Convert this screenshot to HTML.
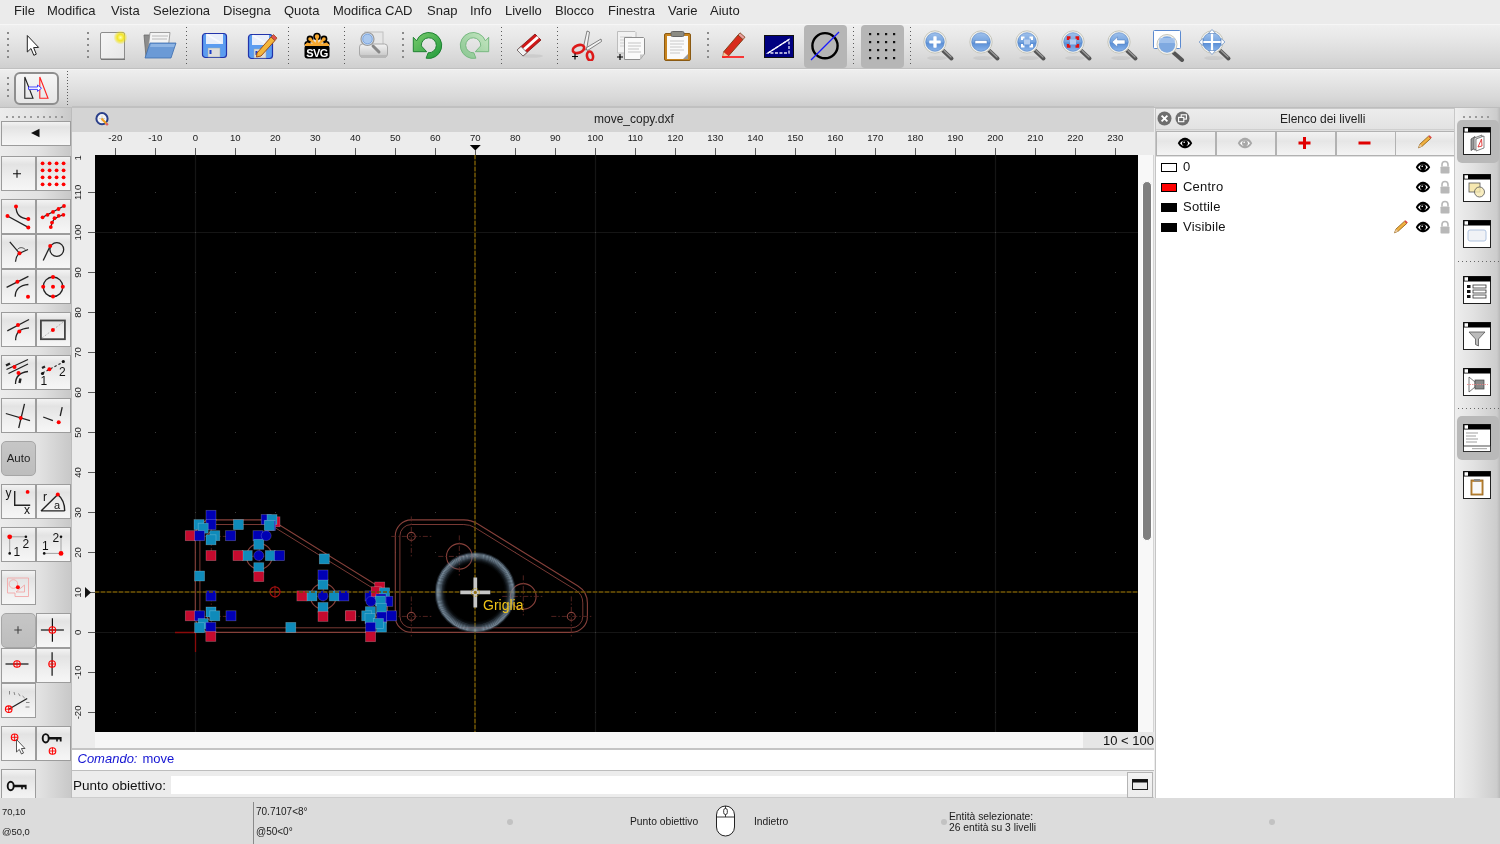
<!DOCTYPE html>
<html><head><meta charset="utf-8">
<style>
*{box-sizing:border-box;margin:0;padding:0}
html,body{width:1500px;height:844px;overflow:hidden;background:#ececec;font-family:"Liberation Sans",sans-serif;color:#1a1a1a}
.a{position:absolute}
#root{position:absolute;left:0;top:0;width:1500px;height:844px;will-change:transform}
.menu{left:0;top:0;width:1500px;height:24px;background:#ebebeb}
.menu span{position:absolute;top:3px;font-size:13px;color:#222;line-height:16px}
.tb1{left:0;top:24px;width:1500px;height:45px;background:linear-gradient(#efefef,#e6e6e6 35%,#d9d9d9 75%,#cfcfcf);border-top:1px solid #f6f6f6;border-bottom:1px solid #c0c0c0}
.tb2{left:0;top:69px;width:1500px;height:39px;background:linear-gradient(#eeeeee,#e4e4e4 35%,#d8d8d8 75%,#cccccc);border-top:1px solid #f4f4f4;border-bottom:1px solid #bdbdbd}
.sep{position:absolute;width:2px;background-image:radial-gradient(circle,#555 0.7px,transparent 1px);background-size:2px 4px}
.ldock{left:0;top:108px;width:71px;height:690px;background:linear-gradient(90deg,#e6e6e6,#dedede 70%,#c4c4c4)}
.btn{position:absolute;width:35px;height:35px;background:linear-gradient(#f7f7f7,#e4e4e4);border:1px solid #a8a8a8}
.btnl,.btnp{position:absolute;width:35px;height:35px;border:1px solid #9c9c9c;background:linear-gradient(#f3f3f3,#e3e3e3 22%,#efefef 65%,#f6f6f6)}
.btnp{background:linear-gradient(#c6c6c6,#bdbdbd);border-color:#a6a6a6}
.sec{position:absolute;left:0;width:71px;height:9px;background:linear-gradient(90deg,#d8d8d8,#c8c8c8)}
.status{left:0;top:798px;width:1500px;height:46px;background:#dcdcdc}
.st{position:absolute;font-size:10px;color:#1a1a1a;line-height:12px}
</style></head><body><div id="root">
<div class="a menu">
<span style="left:14px">File</span><span style="left:47px">Modifica</span><span style="left:111px">Vista</span><span style="left:153px">Seleziona</span><span style="left:223px">Disegna</span><span style="left:284px">Quota</span><span style="left:333px">Modifica CAD</span><span style="left:427px">Snap</span><span style="left:470px">Info</span><span style="left:505px">Livello</span><span style="left:555px">Blocco</span><span style="left:608px">Finestra</span><span style="left:668px">Varie</span><span style="left:710px">Aiuto</span>
</div>
<div class="a tb1"></div>
<div class="a tb2"></div>
<div class="a" style="left:7.0px;top:32.0px;width:2px;height:2px;background:#8a8a8a"></div><div class="a" style="left:7.0px;top:38.0px;width:2px;height:2px;background:#8a8a8a"></div><div class="a" style="left:7.0px;top:44.0px;width:2px;height:2px;background:#8a8a8a"></div><div class="a" style="left:7.0px;top:50.0px;width:2px;height:2px;background:#8a8a8a"></div><div class="a" style="left:7.0px;top:56.0px;width:2px;height:2px;background:#8a8a8a"></div><div class="a" style="left:87.0px;top:32.0px;width:2px;height:2px;background:#8a8a8a"></div><div class="a" style="left:87.0px;top:38.0px;width:2px;height:2px;background:#8a8a8a"></div><div class="a" style="left:87.0px;top:44.0px;width:2px;height:2px;background:#8a8a8a"></div><div class="a" style="left:87.0px;top:50.0px;width:2px;height:2px;background:#8a8a8a"></div><div class="a" style="left:87.0px;top:56.0px;width:2px;height:2px;background:#8a8a8a"></div><div class="a" style="left:402.0px;top:32.0px;width:2px;height:2px;background:#8a8a8a"></div><div class="a" style="left:402.0px;top:38.0px;width:2px;height:2px;background:#8a8a8a"></div><div class="a" style="left:402.0px;top:44.0px;width:2px;height:2px;background:#8a8a8a"></div><div class="a" style="left:402.0px;top:50.0px;width:2px;height:2px;background:#8a8a8a"></div><div class="a" style="left:402.0px;top:56.0px;width:2px;height:2px;background:#8a8a8a"></div><div class="a" style="left:707.0px;top:32.0px;width:2px;height:2px;background:#8a8a8a"></div><div class="a" style="left:707.0px;top:38.0px;width:2px;height:2px;background:#8a8a8a"></div><div class="a" style="left:707.0px;top:44.0px;width:2px;height:2px;background:#8a8a8a"></div><div class="a" style="left:707.0px;top:50.0px;width:2px;height:2px;background:#8a8a8a"></div><div class="a" style="left:707.0px;top:56.0px;width:2px;height:2px;background:#8a8a8a"></div><div class="a" style="left:186px;top:27px;width:1px;height:39px;background:repeating-linear-gradient(#5a5a5a 0 1px,transparent 1px 4px)"></div><div class="a" style="left:288px;top:27px;width:1px;height:39px;background:repeating-linear-gradient(#5a5a5a 0 1px,transparent 1px 4px)"></div><div class="a" style="left:344px;top:27px;width:1px;height:39px;background:repeating-linear-gradient(#5a5a5a 0 1px,transparent 1px 4px)"></div><div class="a" style="left:501px;top:27px;width:1px;height:39px;background:repeating-linear-gradient(#5a5a5a 0 1px,transparent 1px 4px)"></div><div class="a" style="left:557px;top:27px;width:1px;height:39px;background:repeating-linear-gradient(#5a5a5a 0 1px,transparent 1px 4px)"></div><div class="a" style="left:853px;top:27px;width:1px;height:39px;background:repeating-linear-gradient(#5a5a5a 0 1px,transparent 1px 4px)"></div><div class="a" style="left:910px;top:27px;width:1px;height:39px;background:repeating-linear-gradient(#5a5a5a 0 1px,transparent 1px 4px)"></div><svg class="a" style="left:24px;top:33px" width="18" height="26" viewBox="0 0 18 26"><path d="M3.3,2.5 L3.3,19 L7,15.5 L9.8,22.3 L12.3,21.2 L9.6,14.6 L14.6,14.4 Z" fill="#fff" stroke="#222" stroke-width="1" stroke-linejoin="round"/></svg><svg class="a" style="left:98px;top:30px" width="32" height="32" viewBox="0 0 32 32"><defs><radialGradient id="gl"><stop offset="0" stop-color="#ffffb0"/><stop offset="0.45" stop-color="#f4e628"/><stop offset="1" stop-color="#f0e000" stop-opacity="0"/></radialGradient><linearGradient id="pp" x1="0" y1="0" x2="1" y2="1"><stop offset="0" stop-color="#f6f6f6"/><stop offset="1" stop-color="#e6e6e6"/></linearGradient></defs><rect x="2.5" y="2.5" width="24" height="27" rx="1.5" fill="url(#pp)" stroke="#8c8c8c"/><rect x="3" y="28.5" width="24" height="1.5" fill="#777"/><circle cx="22.5" cy="7.5" r="7" fill="url(#gl)"/></svg><svg class="a" style="left:142px;top:30px" width="36" height="32" viewBox="0 0 36 32"><path d="M2,5 L12,5 L14,7 L14,27 L4,27 Z" fill="#8c8c8c" stroke="#6a6a6a" stroke-width="0.8"/><path d="M8,2.5 L28,2.5 L26,20 L6,20 Z" fill="#f4f4f4" stroke="#8a8a8a" stroke-width="0.8"/><path d="M10,6 L26,6 M10,9 L25,9" stroke="#b8b8b8" stroke-width="1.2"/><path d="M8,13 L34,13 L29,28 L3,28 Z" fill="#6b9ad6" stroke="#3f6fae" stroke-width="0.8"/><path d="M9,14 L33,14 L32,17 L8,17 Z" fill="#8fb5e4"/></svg><svg class="a" style="left:201px;top:32px" width="28" height="28" viewBox="0 0 28 28"><rect x="1.5" y="1.5" width="24" height="24" rx="3" fill="#5b9cf0" stroke="#2233aa" stroke-width="1.2"/><rect x="5" y="2" width="17" height="10" fill="#e8eefa"/><path d="M6,2.5 L20,11" stroke="#fff" stroke-width="2" opacity="0.6"/><rect x="7" y="16" width="12" height="9" fill="#dcdcdc" stroke="#9aa" stroke-width="0.5"/><rect x="8.5" y="18" width="2" height="4" fill="#1a3cc8"/></svg><svg class="a" style="left:247px;top:31px" width="32" height="30" viewBox="0 0 32 30"><g transform="translate(0,2)"><rect x="1.5" y="1.5" width="24" height="24" rx="3" fill="#5b9cf0" stroke="#2233aa" stroke-width="1.2"/><rect x="5" y="2" width="17" height="10" fill="#e8eefa"/><path d="M6,2.5 L20,11" stroke="#fff" stroke-width="2" opacity="0.6"/><rect x="7" y="16" width="12" height="9" fill="#dcdcdc" stroke="#9aa" stroke-width="0.5"/><rect x="8.5" y="18" width="2" height="4" fill="#1a3cc8"/></g><path d="M10,22 L24,6 L28,9.5 L14,25 L9.5,26 Z" fill="#f3b63c" stroke="#a0501a" stroke-width="1"/><path d="M24,6 L26.5,3.5 L30,7 L28,9.5 Z" fill="#e05050" stroke="#a0501a" stroke-width="0.8"/></svg><svg class="a" style="left:303px;top:32px" width="28" height="28" viewBox="0 0 28 28"><g fill="#f6a830" stroke="#000" stroke-width="1.6"><circle cx="14" cy="4.5" r="3"/><circle cx="7" cy="7" r="2.6"/><circle cx="21" cy="7" r="2.6"/><circle cx="4.5" cy="12" r="2.3"/><circle cx="23.5" cy="12" r="2.3"/></g><path d="M14,14 L14,5 M14,14 L7,7 M14,14 L21,7 M14,14 L4.5,12 M14,14 L23.5,12" stroke="#f6a830" stroke-width="2.5"/><rect x="1.5" y="13" width="25" height="13.5" rx="3" fill="#000"/><rect x="2" y="12" width="24" height="2" fill="#f6a830"/><text x="14" y="24.6" text-anchor="middle" font-family="Liberation Sans" font-weight="bold" font-size="11" fill="#fff" letter-spacing="-0.5">SVG</text></svg><svg class="a" style="left:357px;top:30px" width="32" height="32" viewBox="0 0 32 32"><defs><linearGradient id="pr" x1="0" y1="0" x2="0" y2="1"><stop offset="0" stop-color="#f4f4f4"/><stop offset="1" stop-color="#c4c4c4"/></linearGradient></defs><rect x="8" y="2" width="18" height="14" fill="#e6e6e6" stroke="#c0c0c0"/><rect x="2.5" y="14" width="28" height="13" rx="3" fill="url(#pr)" stroke="#a8a8a8"/><rect x="4" y="25" width="25" height="3" fill="#b8b8b8"/><path d="M16,16 L22,22" stroke="#888" stroke-width="3" stroke-linecap="round"/><circle cx="10.5" cy="9" r="6.5" fill="#c8dcf4" stroke="#9a9a9a" stroke-width="1.2"/><circle cx="10.5" cy="9" r="4.8" fill="#aac8ee" stroke="#5a8ad0" stroke-width="0.6"/></svg><svg class="a" style="left:412px;top:31px" width="31" height="30" viewBox="0 0 31 30"><defs><linearGradient id="ugu" x1="0" y1="0" x2="1" y2="1"><stop offset="0" stop-color="#7ccc6e"/><stop offset="1" stop-color="#1f9a3a"/></linearGradient></defs><path d="M1.3,6.3 L1.3,20.7 L14.7,20.7 L9.33,14.93 A7.5,7.5 0 1 1 16.15,21.77 L14.1,27.2 A13,13 0 1 0 4.59,9.84 Z" fill="url(#ugu)" stroke="#157a2a" stroke-width="0.9" stroke-linejoin="round"/></svg><svg class="a" style="left:459px;top:31px" width="31" height="30" viewBox="0 0 31 30"><g transform="translate(31,0) scale(-1,1)"><defs><linearGradient id="ugr" x1="0" y1="0" x2="1" y2="1"><stop offset="0" stop-color="#c8e8c4"/><stop offset="1" stop-color="#86c48e"/></linearGradient></defs><path d="M1.3,6.3 L1.3,20.7 L14.7,20.7 L9.33,14.93 A7.5,7.5 0 1 1 16.15,21.77 L14.1,27.2 A13,13 0 1 0 4.59,9.84 Z" fill="url(#ugr)" stroke="#70b47a" stroke-width="0.9" stroke-linejoin="round"/></g></svg><svg class="a" style="left:515px;top:31px" width="30" height="30" viewBox="0 0 30 30"><ellipse cx="17" cy="25" rx="11" ry="1.8" fill="#c8c8c8" opacity="0.8"/><path d="M2,19 L20,3 L26,9 L8,25 Z" fill="#d01818" stroke="#7a1010" stroke-width="0.8"/><path d="M4,21 L22,5 L24,7 L6,23 Z" fill="#fff"/><path d="M2,19 L6,15.5 L12,21.5 L8,25 Z" fill="#f2f2f2" stroke="#666" stroke-width="0.8"/></svg><svg class="a" style="left:570px;top:29px" width="32" height="32" viewBox="0 0 32 32"><path d="M13,20 L17,2 L19.5,3 L16.5,21 Z" fill="#f4f4f4" stroke="#666" stroke-width="0.8"/><path d="M16,19 L31,10 L31.5,12.5 L17.5,21.5 Z" fill="#f4f4f4" stroke="#666" stroke-width="0.8"/><ellipse cx="8.5" cy="20" rx="6" ry="3.8" transform="rotate(-20 8.5 20)" fill="none" stroke="#dd1a1a" stroke-width="2.6"/><ellipse cx="20" cy="27" rx="3" ry="4.6" transform="rotate(-10 20 27)" fill="none" stroke="#dd1a1a" stroke-width="2.6"/><path d="M2,27.5h6M5,24.5v6" stroke="#000" stroke-width="1.2"/></svg><svg class="a" style="left:615px;top:29px" width="34" height="34" viewBox="0 0 34 34"><path d="M2.5,2.5 L20,2.5 L21,3.5 L21,24 L2.5,24 Z" fill="#f2f2f2" stroke="#bdbdbd"/><path d="M5,8h12M5,11h12M5,14h12M5,17h12" stroke="#cfcfcf" stroke-width="1"/><path d="M9.5,8.5 L28.5,8.5 L29.5,9.5 L29.5,25 L25,30.5 L9.5,30.5 Z" fill="#fafafa" stroke="#8e8e8e"/><path d="M25,30 L25,25.5 L29.5,25.5 Z" fill="#c8c8c8"/><path d="M13,14h13M13,17h13M13,20h11M13,23h13" stroke="#c4c4c4" stroke-width="1"/><path d="M2,28h6M5,25v6" stroke="#000" stroke-width="1.2"/></svg><svg class="a" style="left:662px;top:29px" width="32" height="34" viewBox="0 0 32 34"><rect x="2.5" y="4.5" width="26" height="27" rx="1.5" fill="#c8841e" stroke="#8a5a14"/><rect x="5" y="7" width="21" height="23" fill="#fafafa"/><path d="M21,30 L26,25 L26,30 Z" fill="#9a9a9a"/><rect x="9" y="2.5" width="13" height="5" rx="1.5" fill="#8c8c84" stroke="#666"/><path d="M8,12h14M8,15h14M8,18h12M8,21h14M8,24h10" stroke="#c8c8c8" stroke-width="1"/></svg><svg class="a" style="left:720px;top:30px" width="26" height="30" viewBox="0 0 26 30"><path d="M3.5,22 L18,5 L23,9.5 L8.5,26 L3,27.5 Z" fill="#d82c1c" stroke="#7a3a10" stroke-width="0.9"/><path d="M18,5 L20,2.8 L25,7.2 L23,9.5 Z" fill="#eaa0a0" stroke="#7a3a10" stroke-width="0.8"/><path d="M3.5,22 L8.5,26 L3,27.5 Z" fill="#f0c8a0"/><rect x="2" y="26.2" width="22" height="1.6" fill="#ff1010"/></svg><svg class="a" style="left:763px;top:34px" width="32" height="25" viewBox="0 0 32 25"><rect x="1.5" y="1.5" width="29" height="22" fill="#000080" stroke="#111" stroke-width="1"/><path d="M5,19 L26,5.5 L26,19 Z" fill="none" stroke="#e8e8f8" stroke-width="1.3" stroke-dasharray="3,1.5"/><path d="M5,19 L26,5.5" stroke="#fff" stroke-width="1.3"/></svg><div class="a" style="left:804px;top:25px;width:43px;height:43px;background:#b6b6b6;border-radius:4px"></div><div class="a" style="left:861px;top:25px;width:43px;height:43px;background:#b6b6b6;border-radius:4px"></div><svg class="a" style="left:804px;top:25px" width="43" height="43" viewBox="0 0 43 43"><circle cx="21" cy="20.7" r="12.6" fill="none" stroke="#000" stroke-width="2.4"/><path d="M7,35 L35,7" stroke="#1a1aff" stroke-width="1.3"/></svg><svg class="a" style="left:861px;top:25px" width="43" height="43" viewBox="0 0 43 43"><rect x="8" y="8" width="2.2" height="2.2" fill="#111"/><rect x="8" y="16" width="2.2" height="2.2" fill="#111"/><rect x="8" y="24" width="2.2" height="2.2" fill="#111"/><rect x="8" y="32" width="2.2" height="2.2" fill="#111"/><rect x="16" y="8" width="2.2" height="2.2" fill="#111"/><rect x="16" y="16" width="2.2" height="2.2" fill="#111"/><rect x="16" y="24" width="2.2" height="2.2" fill="#111"/><rect x="16" y="32" width="2.2" height="2.2" fill="#111"/><rect x="24" y="8" width="2.2" height="2.2" fill="#111"/><rect x="24" y="16" width="2.2" height="2.2" fill="#111"/><rect x="24" y="24" width="2.2" height="2.2" fill="#111"/><rect x="24" y="32" width="2.2" height="2.2" fill="#111"/><rect x="32" y="8" width="2.2" height="2.2" fill="#111"/><rect x="32" y="16" width="2.2" height="2.2" fill="#111"/><rect x="32" y="24" width="2.2" height="2.2" fill="#111"/><rect x="32" y="32" width="2.2" height="2.2" fill="#111"/></svg><svg class="a" style="left:921px;top:29px" width="36" height="34" viewBox="0 0 36 34"><defs><linearGradient id="za" x1="0" y1="0" x2="0" y2="1"><stop offset="0" stop-color="#9fc1ec"/><stop offset="0.5" stop-color="#74a3de"/><stop offset="0.56" stop-color="#5b8fd6"/><stop offset="1" stop-color="#8ab4ea"/></linearGradient></defs><ellipse cx="16" cy="29" rx="10" ry="2" fill="#000" opacity="0.06"/><path d="M22,21.5 L30.5,29.5" stroke="#555" stroke-width="4" stroke-linecap="round"/><path d="M23,21.5 L30,28" stroke="#9a9a9a" stroke-width="1.2" stroke-linecap="round"/><circle cx="14" cy="13" r="11.2" fill="#f2f2ee" stroke="#c6c6bc" stroke-width="1"/><circle cx="14" cy="13" r="9.3" fill="url(#za)" stroke="#4e7fc4" stroke-width="0.6"/><path d="M14,7.5v11M8.5,13h11" stroke="#fff" stroke-width="3.2"/><path d="M14,7.5v11M8.5,13h11" stroke="#fff" stroke-width="2.2"/></svg><svg class="a" style="left:967px;top:29px" width="36" height="34" viewBox="0 0 36 34"><defs><linearGradient id="zb" x1="0" y1="0" x2="0" y2="1"><stop offset="0" stop-color="#9fc1ec"/><stop offset="0.5" stop-color="#74a3de"/><stop offset="0.56" stop-color="#5b8fd6"/><stop offset="1" stop-color="#8ab4ea"/></linearGradient></defs><ellipse cx="16" cy="29" rx="10" ry="2" fill="#000" opacity="0.06"/><path d="M22,21.5 L30.5,29.5" stroke="#555" stroke-width="4" stroke-linecap="round"/><path d="M23,21.5 L30,28" stroke="#9a9a9a" stroke-width="1.2" stroke-linecap="round"/><circle cx="14" cy="13" r="11.2" fill="#f2f2ee" stroke="#c6c6bc" stroke-width="1"/><circle cx="14" cy="13" r="9.3" fill="url(#zb)" stroke="#4e7fc4" stroke-width="0.6"/><rect x="8" y="11.5" width="12" height="3.2" fill="#fff" stroke="#4a78bb" stroke-width="0.5"/></svg><svg class="a" style="left:1013px;top:29px" width="36" height="34" viewBox="0 0 36 34"><defs><linearGradient id="zc" x1="0" y1="0" x2="0" y2="1"><stop offset="0" stop-color="#9fc1ec"/><stop offset="0.5" stop-color="#74a3de"/><stop offset="0.56" stop-color="#5b8fd6"/><stop offset="1" stop-color="#8ab4ea"/></linearGradient></defs><ellipse cx="16" cy="29" rx="10" ry="2" fill="#000" opacity="0.06"/><path d="M22,21.5 L30.5,29.5" stroke="#555" stroke-width="4" stroke-linecap="round"/><path d="M23,21.5 L30,28" stroke="#9a9a9a" stroke-width="1.2" stroke-linecap="round"/><circle cx="14" cy="13" r="11.2" fill="#f2f2ee" stroke="#c6c6bc" stroke-width="1"/><circle cx="14" cy="13" r="9.3" fill="url(#zc)" stroke="#4e7fc4" stroke-width="0.6"/><path d="M9,11 V8.5 H11.5 M16.5,8.5 H19 V11 M19,15 V17.5 H16.5 M11.5,17.5 H9 V15" fill="none" stroke="#fff" stroke-width="2"/><rect x="11" y="10.5" width="6" height="5" fill="#b4cdef"/></svg><svg class="a" style="left:1059px;top:29px" width="36" height="34" viewBox="0 0 36 34"><defs><linearGradient id="zd" x1="0" y1="0" x2="0" y2="1"><stop offset="0" stop-color="#9fc1ec"/><stop offset="0.5" stop-color="#74a3de"/><stop offset="0.56" stop-color="#5b8fd6"/><stop offset="1" stop-color="#8ab4ea"/></linearGradient></defs><ellipse cx="16" cy="29" rx="10" ry="2" fill="#000" opacity="0.06"/><path d="M22,21.5 L30.5,29.5" stroke="#555" stroke-width="4" stroke-linecap="round"/><path d="M23,21.5 L30,28" stroke="#9a9a9a" stroke-width="1.2" stroke-linecap="round"/><circle cx="14" cy="13" r="11.2" fill="#f2f2ee" stroke="#c6c6bc" stroke-width="1"/><circle cx="14" cy="13" r="9.3" fill="url(#zd)" stroke="#4e7fc4" stroke-width="0.6"/><path d="M9,11 V8.5 H11.5 M16.5,8.5 H19 V11 M19,15 V17.5 H16.5 M11.5,17.5 H9 V15" fill="none" stroke="#e01010" stroke-width="2.4"/><rect x="11" y="10.5" width="6" height="5" fill="#b4cdef"/></svg><svg class="a" style="left:1105px;top:29px" width="36" height="34" viewBox="0 0 36 34"><defs><linearGradient id="ze" x1="0" y1="0" x2="0" y2="1"><stop offset="0" stop-color="#9fc1ec"/><stop offset="0.5" stop-color="#74a3de"/><stop offset="0.56" stop-color="#5b8fd6"/><stop offset="1" stop-color="#8ab4ea"/></linearGradient></defs><ellipse cx="16" cy="29" rx="10" ry="2" fill="#000" opacity="0.06"/><path d="M22,21.5 L30.5,29.5" stroke="#555" stroke-width="4" stroke-linecap="round"/><path d="M23,21.5 L30,28" stroke="#9a9a9a" stroke-width="1.2" stroke-linecap="round"/><circle cx="14" cy="13" r="11.2" fill="#f2f2ee" stroke="#c6c6bc" stroke-width="1"/><circle cx="14" cy="13" r="9.3" fill="url(#ze)" stroke="#4e7fc4" stroke-width="0.6"/><path d="M7,13 L12.5,8 V11 H20 V15 H12.5 V18 Z" fill="#fff" stroke="#4a78bb" stroke-width="0.5"/></svg><svg class="a" style="left:1152px;top:29px" width="34" height="33" viewBox="0 0 34 33"><rect x="1.5" y="1.5" width="27" height="18" rx="1" fill="#fff" stroke="#5b8ad0" stroke-width="1"/><path d="M22,24 L30,31" stroke="#555" stroke-width="4" stroke-linecap="round"/><circle cx="15" cy="15.5" r="10" fill="#f2f2ee" stroke="#c6c6bc" stroke-width="1"/><circle cx="15" cy="15.5" r="8.2" fill="#7fa9e0"/><rect x="7" y="9" width="16" height="5" fill="#a8c6ee" opacity="0.8"/></svg><svg class="a" style="left:1198px;top:29px" width="36" height="34" viewBox="0 0 36 34"><defs><linearGradient id="zf" x1="0" y1="0" x2="0" y2="1"><stop offset="0" stop-color="#9fc1ec"/><stop offset="0.5" stop-color="#74a3de"/><stop offset="0.56" stop-color="#5b8fd6"/><stop offset="1" stop-color="#8ab4ea"/></linearGradient></defs><ellipse cx="16" cy="29" rx="10" ry="2" fill="#000" opacity="0.06"/><path d="M22,21.5 L30.5,29.5" stroke="#555" stroke-width="4" stroke-linecap="round"/><path d="M23,21.5 L30,28" stroke="#9a9a9a" stroke-width="1.2" stroke-linecap="round"/><circle cx="14" cy="13" r="11.2" fill="#f2f2ee" stroke="#c6c6bc" stroke-width="1"/><circle cx="14" cy="13" r="9.3" fill="url(#zf)" stroke="#4e7fc4" stroke-width="0.6"/><path d="M14,1.5 V24.5 M2.5,13 H25.5" stroke="#fff" stroke-width="2.2"/><path d="M14,0.5 L10.5,4.5 H17.5 Z M14,25.5 L10.5,21.5 H17.5 Z M1,13 L5,9.5 V16.5 Z M27,13 L23,9.5 V16.5 Z" fill="#fff" stroke="#4a78bb" stroke-width="0.6"/></svg><div class="a" style="left:7.0px;top:77.0px;width:2px;height:2px;background:#8a8a8a"></div><div class="a" style="left:7.0px;top:83.0px;width:2px;height:2px;background:#8a8a8a"></div><div class="a" style="left:7.0px;top:89.0px;width:2px;height:2px;background:#8a8a8a"></div><div class="a" style="left:7.0px;top:95.0px;width:2px;height:2px;background:#8a8a8a"></div><div class="a" style="left:14px;top:72px;width:45px;height:33px;border:2px solid #8e8e8e;border-radius:6px;background:linear-gradient(#f6f6f6,#e6e6e6)"></div><svg class="a" style="left:20px;top:74px" width="34" height="29" viewBox="0 0 34 29"><path d="M4.8,3 L4.8,24.3 L13,24.3 Z" fill="none" stroke="#222" stroke-width="1.1"/><path d="M19.8,3 L19.8,24.3 L28,24.3 Z" fill="none" stroke="#ff2020" stroke-width="1.1"/><path d="M8.5,13 H17.5 V11 L21.5,14.2 L17.5,17.4 V15.4 H8.5 Z" fill="#fff" stroke="#3030ff" stroke-width="0.9"/></svg><div class="a" style="left:67px;top:71px;width:1px;height:35px;background:repeating-linear-gradient(#5a5a5a 0 1px,transparent 1px 3px)"></div>
<div class="a" style="left:0;top:108px;width:72px;height:691px;background:linear-gradient(90deg,#ececec,#e2e2e2 55%,#c8c8c8);border-right:1px solid #bcbcbc"></div><div class="a" style="left:6.0px;top:116.0px;width:2px;height:2px;background:#9a9a9a"></div><div class="a" style="left:12.1px;top:116.0px;width:2px;height:2px;background:#9a9a9a"></div><div class="a" style="left:18.2px;top:116.0px;width:2px;height:2px;background:#9a9a9a"></div><div class="a" style="left:24.3px;top:116.0px;width:2px;height:2px;background:#9a9a9a"></div><div class="a" style="left:30.4px;top:116.0px;width:2px;height:2px;background:#9a9a9a"></div><div class="a" style="left:36.5px;top:116.0px;width:2px;height:2px;background:#9a9a9a"></div><div class="a" style="left:42.6px;top:116.0px;width:2px;height:2px;background:#9a9a9a"></div><div class="a" style="left:48.7px;top:116.0px;width:2px;height:2px;background:#9a9a9a"></div><div class="a" style="left:54.8px;top:116.0px;width:2px;height:2px;background:#9a9a9a"></div><div class="a" style="left:60.9px;top:116.0px;width:2px;height:2px;background:#9a9a9a"></div><div class="btnl" style="left:1px;top:121px;width:70px;height:25px"></div><svg class="a" style="left:28px;top:126px" width="14" height="14" viewBox="0 0 14 14"><path d="M3,7 L11.5,2.8 L11.5,11.2 Z" fill="#111"/></svg><div class="btnl" style="left:1px;top:156px"></div><svg class="a" style="left:0px;top:156px" width="36" height="35" viewBox="0 0 36 35"><path d="M13,17.7h8M17,13.7v8" fill="none" stroke="#111" stroke-width="1.1"/></svg><div class="btnl" style="left:36px;top:156px"></div><svg class="a" style="left:35px;top:156px" width="36" height="35" viewBox="0 0 36 35"><circle cx="7.6" cy="7.3" r="1.9" fill="#ff0000"/><circle cx="7.6" cy="14.3" r="1.9" fill="#ff0000"/><circle cx="7.6" cy="21.3" r="1.9" fill="#ff0000"/><circle cx="7.6" cy="28.3" r="1.9" fill="#ff0000"/><circle cx="14.6" cy="7.3" r="1.9" fill="#ff0000"/><circle cx="14.6" cy="14.3" r="1.9" fill="#ff0000"/><circle cx="14.6" cy="21.3" r="1.9" fill="#ff0000"/><circle cx="14.6" cy="28.3" r="1.9" fill="#ff0000"/><circle cx="21.6" cy="7.3" r="1.9" fill="#ff0000"/><circle cx="21.6" cy="14.3" r="1.9" fill="#ff0000"/><circle cx="21.6" cy="21.3" r="1.9" fill="#ff0000"/><circle cx="21.6" cy="28.3" r="1.9" fill="#ff0000"/><circle cx="28.6" cy="7.3" r="1.9" fill="#ff0000"/><circle cx="28.6" cy="14.3" r="1.9" fill="#ff0000"/><circle cx="28.6" cy="21.3" r="1.9" fill="#ff0000"/><circle cx="28.6" cy="28.3" r="1.9" fill="#ff0000"/></svg><div class="btnl" style="left:1px;top:199px"></div><svg class="a" style="left:0px;top:199px" width="36" height="35" viewBox="0 0 36 35"><path d="M7.5,17 L28.3,28.4" fill="none" stroke="#222" stroke-width="1.3"/><path d="M16,7.5 C16,15 20,19.5 28.3,20" fill="none" stroke="#222" stroke-width="1.3"/><circle cx="7.5" cy="17" r="2" fill="#ff0000"/><circle cx="16" cy="7.5" r="2" fill="#ff0000"/><circle cx="28.3" cy="20" r="2" fill="#ff0000"/><circle cx="28.3" cy="28.4" r="2" fill="#ff0000"/></svg><div class="btnl" style="left:36px;top:199px"></div><svg class="a" style="left:35px;top:199px" width="36" height="35" viewBox="0 0 36 35"><path d="M7.6,18.3 L29,7" fill="none" stroke="#222" stroke-width="1.3"/><path d="M15.8,28.1 C16.5,22 20,17.5 28.4,15.8" fill="none" stroke="#222" stroke-width="1.3"/><circle cx="7.6" cy="18.3" r="1.9" fill="#ff0000"/><circle cx="12.5" cy="15.8" r="1.9" fill="#ff0000"/><circle cx="18" cy="12.9" r="1.9" fill="#ff0000"/><circle cx="23.5" cy="10" r="1.9" fill="#ff0000"/><circle cx="29" cy="7" r="1.9" fill="#ff0000"/><circle cx="15.8" cy="28.1" r="1.9" fill="#ff0000"/><circle cx="17" cy="23.6" r="1.9" fill="#ff0000"/><circle cx="19.5" cy="19.2" r="1.9" fill="#ff0000"/><circle cx="23.7" cy="16.8" r="1.9" fill="#ff0000"/><circle cx="28.4" cy="15.8" r="1.9" fill="#ff0000"/></svg><div class="btnl" style="left:1px;top:234px"></div><svg class="a" style="left:0px;top:234px" width="36" height="35" viewBox="0 0 36 35"><path d="M9.8,7.9 L19.5,19.3 L28,15.5" fill="none" stroke="#222" stroke-width="1.3"/><path d="M15.5,27.8 C15.8,23.5 17,21 19.5,19.3" fill="none" stroke="#222" stroke-width="1.3"/><path d="M17.5,15.5 C19.5,13 23,13 25.5,15.8" fill="none" stroke="#222" stroke-width="0.8"/><circle cx="19.5" cy="19.3" r="2" fill="#ff0000"/></svg><div class="btnl" style="left:36px;top:234px"></div><svg class="a" style="left:35px;top:234px" width="36" height="35" viewBox="0 0 36 35"><path d="M8.2,26.5 L15.2,12" fill="none" stroke="#222" stroke-width="1.3"/><circle cx="21.8" cy="15.5" r="6.9" fill="none" stroke="#222" stroke-width="1.3"/><circle cx="15.2" cy="12" r="2" fill="#ff0000"/></svg><div class="btnl" style="left:1px;top:269px"></div><svg class="a" style="left:0px;top:269px" width="36" height="35" viewBox="0 0 36 35"><path d="M6.6,18.4 L28.4,7.4" fill="none" stroke="#222" stroke-width="1.3"/><path d="M15.2,27.8 C15.2,21 19.5,16 28.4,15.5" fill="none" stroke="#222" stroke-width="1.3"/><circle cx="17.4" cy="12.7" r="2" fill="#ff0000"/><circle cx="28" cy="27.8" r="2" fill="#ff0000"/></svg><div class="btnl" style="left:36px;top:269px"></div><svg class="a" style="left:35px;top:269px" width="36" height="35" viewBox="0 0 36 35"><circle cx="18" cy="17.8" r="9.8" fill="none" stroke="#222" stroke-width="1.3"/><circle cx="18" cy="17.8" r="2" fill="#ff0000"/><circle cx="18" cy="8" r="2" fill="#ff0000"/><circle cx="18" cy="27.6" r="2" fill="#ff0000"/><circle cx="8.2" cy="17.8" r="2" fill="#ff0000"/><circle cx="27.8" cy="17.8" r="2" fill="#ff0000"/></svg><div class="btnl" style="left:1px;top:312px"></div><svg class="a" style="left:0px;top:312px" width="36" height="35" viewBox="0 0 36 35"><path d="M7.3,18.9 L29,7.5" fill="none" stroke="#222" stroke-width="1.3"/><path d="M15.6,28.2 C15.6,21 20,16.5 29,15.8" fill="none" stroke="#222" stroke-width="1.3"/><circle cx="18" cy="13" r="2" fill="#ff0000"/><circle cx="19.3" cy="19.5" r="2" fill="#ff0000"/></svg><div class="btnl" style="left:36px;top:312px"></div><svg class="a" style="left:35px;top:312px" width="36" height="35" viewBox="0 0 36 35"><rect x="5.9" y="8.5" width="24" height="18.7" fill="none" stroke="#444" stroke-width="1.8"/><path d="M7,26 L29,9.5" fill="none" stroke="#999" stroke-width="0.7" stroke-dasharray="2,1.5"/><circle cx="17.9" cy="17.9" r="2" fill="#ff0000"/></svg><div class="btnl" style="left:1px;top:355px"></div><svg class="a" style="left:0px;top:355px" width="36" height="35" viewBox="0 0 36 35"><path d="M6.5,14.5 L28,4.5" fill="none" stroke="#222" stroke-width="1.3"/><path d="M8.5,18.5 L28,9" fill="none" stroke="#222" stroke-width="1.3"/><path d="M15.5,29 C15.5,22 19.5,17.5 28,16.5" fill="none" stroke="#222" stroke-width="1.3"/><path d="M6,10.5 L10,8.5" fill="none" stroke="#222" stroke-width="2.4"/><path d="M19.5,28 L20.5,23.5" fill="none" stroke="#222" stroke-width="2.4"/><circle cx="14.5" cy="12" r="2" fill="#ff0000"/><circle cx="18.5" cy="18" r="2" fill="#ff0000"/></svg><div class="btnl" style="left:36px;top:355px"></div><svg class="a" style="left:35px;top:355px" width="36" height="35" viewBox="0 0 36 35"><path d="M7.5,18 L28.3,7" fill="none" stroke="#222" stroke-width="1.1" stroke-dasharray="2.5,2"/><path d="M7,13 L10,11.5" fill="none" stroke="#222" stroke-width="2.2"/><circle cx="14.4" cy="14.3" r="2" fill="#ff0000"/><circle cx="7.5" cy="18.5" r="1.6" fill="#111"/><circle cx="28.3" cy="6.5" r="1.6" fill="#111"/><text x="5.5" y="30" font-family="Liberation Sans" font-size="12" fill="#111">1</text><text x="24" y="21" font-family="Liberation Sans" font-size="12" fill="#111">2</text></svg><div class="btnl" style="left:1px;top:398px"></div><svg class="a" style="left:0px;top:398px" width="36" height="35" viewBox="0 0 36 35"><path d="M5.8,15.5 L30,22.7" fill="none" stroke="#222" stroke-width="1.3"/><path d="M24.5,5.9 L18.7,30" fill="none" stroke="#222" stroke-width="1.3"/><circle cx="20.7" cy="20" r="2" fill="#ff0000"/></svg><div class="btnl" style="left:36px;top:398px"></div><svg class="a" style="left:35px;top:398px" width="36" height="35" viewBox="0 0 36 35"><path d="M8.2,19 L17.9,22.7" fill="none" stroke="#222" stroke-width="1.3"/><path d="M27.2,9.2 L25.2,18" fill="none" stroke="#222" stroke-width="1.3"/><circle cx="23.7" cy="24.2" r="2" fill="#ff0000"/></svg><div class="btnp" style="left:1px;top:441px;border-radius:5px"></div><div class="a" style="left:1px;top:441px;width:35px;height:35px;font-size:11.5px;line-height:35px;text-align:center;color:#222">Auto</div><div class="btnl" style="left:1px;top:484px"></div><svg class="a" style="left:0px;top:484px" width="36" height="35" viewBox="0 0 36 35"><path d="M14.7,6.9 V21.3 H30.2" fill="none" stroke="#222" stroke-width="1.4"/><text x="5.5" y="13" font-family="Liberation Sans" font-size="12" fill="#111">y</text><text x="24" y="30" font-family="Liberation Sans" font-size="12" fill="#111">x</text><circle cx="27.6" cy="7.9" r="1.9" fill="#ff0000"/></svg><div class="btnl" style="left:36px;top:484px"></div><svg class="a" style="left:35px;top:484px" width="36" height="35" viewBox="0 0 36 35"><path d="M6,26.9 L22.8,10.5 M6,26.9 L29.7,26.9" fill="none" stroke="#222" stroke-width="1.4"/><path d="M22.8,10.5 C27,14 29.7,20 29.7,26.9" fill="none" stroke="#222" stroke-width="1.4"/><text x="8" y="17" font-family="Liberation Sans" font-size="12" fill="#111">r</text><text x="19" y="25" font-family="Liberation Sans" font-size="11" fill="#111">a</text><circle cx="22.8" cy="10.5" r="2" fill="#ff0000"/></svg><div class="btnl" style="left:1px;top:527px"></div><svg class="a" style="left:0px;top:527px" width="36" height="35" viewBox="0 0 36 35"><path d="M9.7,9.8 H25.9 M9.7,9.8 V26.4" fill="none" stroke="#999" stroke-width="0.9"/><circle cx="9.7" cy="9.8" r="2.4" fill="#ff0000"/><circle cx="25.9" cy="9.8" r="1.3" fill="#111"/><circle cx="9.7" cy="26.4" r="1.3" fill="#111"/><text x="13.5" y="29" font-family="Liberation Sans" font-size="12" fill="#111">1</text><text x="22.5" y="21" font-family="Liberation Sans" font-size="12" fill="#111">2</text></svg><div class="btnl" style="left:36px;top:527px"></div><svg class="a" style="left:35px;top:527px" width="36" height="35" viewBox="0 0 36 35"><path d="M9.2,26.4 H26 M26,9.8 V26.4" fill="none" stroke="#999" stroke-width="0.9"/><circle cx="26" cy="26.4" r="2.4" fill="#ff0000"/><circle cx="26" cy="9.8" r="1.3" fill="#111"/><circle cx="9.2" cy="26.4" r="1.3" fill="#111"/><text x="7" y="23" font-family="Liberation Sans" font-size="12" fill="#111">1</text><text x="17.5" y="15" font-family="Liberation Sans" font-size="12" fill="#111">2</text></svg><div class="btnl" style="left:1px;top:570px"></div><svg class="a" style="left:0px;top:570px" width="36" height="35" viewBox="0 0 36 35"><path d="M7.5,8 H28.5 V26.5 H15 V23 H7.5 Z" fill="none" stroke="#f2a8a8" stroke-width="0.9"/><circle cx="13.4" cy="14" r="4.3" fill="none" stroke="#f2a8a8" stroke-width="0.9"/><path d="M16,22 L24.5,15 V22 Z" fill="none" stroke="#f2a8a8" stroke-width="0.9"/><circle cx="17.9" cy="17.3" r="2" fill="#ff0000"/></svg><div class="btnp" style="left:1px;top:613px;border-radius:5px"></div><svg class="a" style="left:0px;top:613px" width="36" height="35" viewBox="0 0 36 35"><path d="M14.3,17h7.5M18,13.3v7.5" fill="none" stroke="#444" stroke-width="1.1"/></svg><div class="btnl" style="left:36px;top:613px"></div><svg class="a" style="left:35px;top:613px" width="36" height="35" viewBox="0 0 36 35"><path d="M5.899999999999999,17h23.0" fill="none" stroke="#111" stroke-width="1.2"/><path d="M17.4,5.199999999999999v23.6" fill="none" stroke="#111" stroke-width="1.2"/><circle cx="17.4" cy="17" r="3.3" fill="none" stroke="#f00" stroke-width="1.1"/><path d="M14.099999999999998,17h6.6M17.4,13.7v6.6" fill="none" stroke="#f00" stroke-width="0.9"/></svg><div class="btnl" style="left:1px;top:648px"></div><svg class="a" style="left:0px;top:648px" width="36" height="35" viewBox="0 0 36 35"><path d="M5.5,16h23.0" fill="none" stroke="#111" stroke-width="1.2"/><circle cx="17" cy="16" r="3.3" fill="none" stroke="#f00" stroke-width="1.1"/><path d="M13.7,16h6.6M17,12.7v6.6" fill="none" stroke="#f00" stroke-width="0.9"/></svg><div class="btnl" style="left:36px;top:648px"></div><svg class="a" style="left:35px;top:648px" width="36" height="35" viewBox="0 0 36 35"><path d="M17.1,4.199999999999999v23.6" fill="none" stroke="#111" stroke-width="1.2"/><circle cx="17.1" cy="16" r="3.3" fill="none" stroke="#f00" stroke-width="1.1"/><path d="M13.8,16h6.6M17.1,12.7v6.6" fill="none" stroke="#f00" stroke-width="0.9"/></svg><div class="btnl" style="left:1px;top:683px"></div><svg class="a" style="left:0px;top:683px" width="36" height="35" viewBox="0 0 36 35"><path d="M8.7,26.2 L27.2,15.5" fill="none" stroke="#222" stroke-width="1.3"/><path d="M9.5,8 v3.5 M14,9 l0.8,3 M18.5,10.5 l1.6,2.6 M22.5,13 l2.2,2 M26,19.5 h3.5 M25.5,24 h4" fill="none" stroke="#888" stroke-width="1"/><circle cx="8.7" cy="26.2" r="3.3" fill="none" stroke="#f00" stroke-width="1.1"/><path d="M5.3999999999999995,26.2h6.6M8.7,22.9v6.6" fill="none" stroke="#f00" stroke-width="0.9"/></svg><div class="btnl" style="left:1px;top:726px"></div><svg class="a" style="left:0px;top:726px" width="36" height="35" viewBox="0 0 36 35"><circle cx="14.6" cy="11.3" r="3.3" fill="none" stroke="#f00" stroke-width="1.1"/><path d="M11.3,11.3h6.6M14.6,8.0v6.6" fill="none" stroke="#f00" stroke-width="0.9"/><path d="M16.5,13.5 L16.5,26 L19.3,23.4 L21.5,28 L23.5,27 L21.4,22.5 L25,22.5 Z" fill="#fff" stroke="#444" stroke-width="0.9"/></svg><div class="btnl" style="left:36px;top:726px"></div><svg class="a" style="left:35px;top:726px" width="36" height="35" viewBox="0 0 36 35"><ellipse cx="10.7" cy="12.3" rx="3" ry="4.2" fill="none" stroke="#111" stroke-width="1.9"/><path d="M13.6,11 h13 v4.5 h-1.8 v-2 h-2 v2 h-1.6 v-2 h-7.6 z" fill="#111"/><circle cx="17.5" cy="25" r="3.3" fill="none" stroke="#f00" stroke-width="1.1"/><path d="M14.2,25h6.6M17.5,21.7v6.6" fill="none" stroke="#f00" stroke-width="0.9"/></svg><div class="btnl" style="left:1px;top:769px"></div><svg class="a" style="left:0px;top:769px" width="36" height="35" viewBox="0 0 36 35"><ellipse cx="10.7" cy="17" rx="3" ry="4.2" fill="none" stroke="#111" stroke-width="1.9"/><path d="M13.6,15.7 h13 v4.5 h-1.8 v-2 h-2 v2 h-1.6 v-2 h-7.6 z" fill="#111"/></svg>

<!-- document area -->
<div class="a" style="left:72px;top:106px;width:1082px;height:26px;background:#d4d4d4;border-top:2px solid #c0c0c0"></div>
<div class="a" style="left:594px;top:110px;font-size:12px;line-height:18px;color:#222">move_copy.dxf</div>
<svg class="a" style="left:94px;top:111px" width="16" height="16" viewBox="0 0 16 16"><circle cx="8" cy="7.7" r="5.6" fill="#f4f4f4" stroke="#2a3f8a" stroke-width="2"/><path d="M5,7.5h6M8,4.5v6" stroke="#c8c8c8" stroke-width="0.8"/><path d="M7.5,7.5 L12.5,12.8" stroke="#f0a020" stroke-width="2"/><circle cx="13" cy="13.3" r="1.3" fill="#e06060"/></svg>
<div class="a" style="left:72px;top:132px;width:1082px;height:23px;background:#ececec"></div>
<div class="a" style="left:72px;top:155px;width:23px;height:593px;background:#ececec"></div>
<div class="a" style="left:95px;top:155px;width:1043px;height:577px;background:#000"></div>
<div class="a" style="left:1138px;top:155px;width:16px;height:577px;background:#f8f8f8;border-right:1px solid #d4d4d4"></div>
<div class="a" style="left:1142px;top:181px;width:10px;height:360px;border-radius:5px;background:#7f7f7f;border:1px solid #fff"></div>
<div class="a" style="left:95px;top:732px;width:988px;height:16px;background:#f6f6f6"></div>
<div class="a" style="left:1083px;top:732px;width:71px;height:16px;background:#e6e6e6;font-size:13px;text-align:right;line-height:17px;color:#111">10 &lt; 100</div>
<div class="a" style="left:72px;top:748px;width:1082px;height:2px;background:#c4c4c4"></div>
<div class="a" style="left:72px;top:750px;width:1082px;height:21px;background:#fff;border-bottom:1px solid #bdbdbd;font-size:13px;color:#1414d2;line-height:18px"><span class="a" style="left:5.5px;top:0;font-style:italic">Comando:</span><span class="a" style="left:70.4px;top:0">move</span></div>
<div class="a" style="left:72px;top:771px;width:1082px;height:28px;background:#ececec;border-bottom:2px solid #cdcdcd;font-size:13.5px;line-height:30px;padding-left:1px;color:#111">Punto obiettivo:</div>
<div class="a" style="left:171px;top:776px;width:956px;height:18px;background:#fff"></div>
<div class="a" style="left:1127px;top:772px;width:26px;height:26px;background:linear-gradient(#f4f4f4,#ececec);border:1px solid #b4b4b4"></div>
<svg class="a" style="left:1131px;top:778px" width="18" height="14" viewBox="0 0 18 14"><rect x="1.5" y="1.5" width="15" height="10" fill="#ececec" stroke="#222" stroke-width="1"/><rect x="1.5" y="1.5" width="15" height="3" fill="#111"/></svg>

<svg class="a" style="left:0;top:0" width="1500" height="844" viewBox="0 0 1500 844">
<defs><clipPath id="cv"><rect x="95" y="155" width="1043" height="577"/></clipPath><radialGradient id="glow" cx="0.5" cy="0.5" r="0.5"><stop offset="0.72" stop-color="#8096a6" stop-opacity="0"/><stop offset="0.84" stop-color="#8096a6" stop-opacity="0.45"/><stop offset="0.93" stop-color="#94aaba" stop-opacity="0.9"/><stop offset="0.97" stop-color="#8aa0b0" stop-opacity="0.7"/><stop offset="1" stop-color="#8096a6" stop-opacity="0"/></radialGradient></defs>
<g clip-path="url(#cv)">
<rect x="95" y="155" width="1043" height="577" fill="#000"/>
<line x1="195.5" y1="155" x2="195.5" y2="732" stroke="#151515" stroke-width="1.2"/>
<line x1="595.5" y1="155" x2="595.5" y2="732" stroke="#151515" stroke-width="1.2"/>
<line x1="995.5" y1="155" x2="995.5" y2="732" stroke="#151515" stroke-width="1.2"/>
<line x1="95" y1="632.5" x2="1138" y2="632.5" stroke="#151515" stroke-width="1.2"/>
<line x1="95" y1="232.5" x2="1138" y2="232.5" stroke="#151515" stroke-width="1.2"/>
<path d="M115.0,712.0h1v1h-1zM115.0,672.0h1v1h-1zM115.0,632.0h1v1h-1zM115.0,592.0h1v1h-1zM115.0,552.0h1v1h-1zM115.0,512.0h1v1h-1zM115.0,472.0h1v1h-1zM115.0,432.0h1v1h-1zM115.0,392.0h1v1h-1zM115.0,352.0h1v1h-1zM115.0,312.0h1v1h-1zM115.0,272.0h1v1h-1zM115.0,232.0h1v1h-1zM115.0,192.0h1v1h-1zM115.0,152.0h1v1h-1zM155.0,712.0h1v1h-1zM155.0,672.0h1v1h-1zM155.0,632.0h1v1h-1zM155.0,592.0h1v1h-1zM155.0,552.0h1v1h-1zM155.0,512.0h1v1h-1zM155.0,472.0h1v1h-1zM155.0,432.0h1v1h-1zM155.0,392.0h1v1h-1zM155.0,352.0h1v1h-1zM155.0,312.0h1v1h-1zM155.0,272.0h1v1h-1zM155.0,232.0h1v1h-1zM155.0,192.0h1v1h-1zM155.0,152.0h1v1h-1zM195.0,712.0h1v1h-1zM195.0,672.0h1v1h-1zM195.0,632.0h1v1h-1zM195.0,592.0h1v1h-1zM195.0,552.0h1v1h-1zM195.0,512.0h1v1h-1zM195.0,472.0h1v1h-1zM195.0,432.0h1v1h-1zM195.0,392.0h1v1h-1zM195.0,352.0h1v1h-1zM195.0,312.0h1v1h-1zM195.0,272.0h1v1h-1zM195.0,232.0h1v1h-1zM195.0,192.0h1v1h-1zM195.0,152.0h1v1h-1zM235.0,712.0h1v1h-1zM235.0,672.0h1v1h-1zM235.0,632.0h1v1h-1zM235.0,592.0h1v1h-1zM235.0,552.0h1v1h-1zM235.0,512.0h1v1h-1zM235.0,472.0h1v1h-1zM235.0,432.0h1v1h-1zM235.0,392.0h1v1h-1zM235.0,352.0h1v1h-1zM235.0,312.0h1v1h-1zM235.0,272.0h1v1h-1zM235.0,232.0h1v1h-1zM235.0,192.0h1v1h-1zM235.0,152.0h1v1h-1zM275.0,712.0h1v1h-1zM275.0,672.0h1v1h-1zM275.0,632.0h1v1h-1zM275.0,592.0h1v1h-1zM275.0,552.0h1v1h-1zM275.0,512.0h1v1h-1zM275.0,472.0h1v1h-1zM275.0,432.0h1v1h-1zM275.0,392.0h1v1h-1zM275.0,352.0h1v1h-1zM275.0,312.0h1v1h-1zM275.0,272.0h1v1h-1zM275.0,232.0h1v1h-1zM275.0,192.0h1v1h-1zM275.0,152.0h1v1h-1zM315.0,712.0h1v1h-1zM315.0,672.0h1v1h-1zM315.0,632.0h1v1h-1zM315.0,592.0h1v1h-1zM315.0,552.0h1v1h-1zM315.0,512.0h1v1h-1zM315.0,472.0h1v1h-1zM315.0,432.0h1v1h-1zM315.0,392.0h1v1h-1zM315.0,352.0h1v1h-1zM315.0,312.0h1v1h-1zM315.0,272.0h1v1h-1zM315.0,232.0h1v1h-1zM315.0,192.0h1v1h-1zM315.0,152.0h1v1h-1zM355.0,712.0h1v1h-1zM355.0,672.0h1v1h-1zM355.0,632.0h1v1h-1zM355.0,592.0h1v1h-1zM355.0,552.0h1v1h-1zM355.0,512.0h1v1h-1zM355.0,472.0h1v1h-1zM355.0,432.0h1v1h-1zM355.0,392.0h1v1h-1zM355.0,352.0h1v1h-1zM355.0,312.0h1v1h-1zM355.0,272.0h1v1h-1zM355.0,232.0h1v1h-1zM355.0,192.0h1v1h-1zM355.0,152.0h1v1h-1zM395.0,712.0h1v1h-1zM395.0,672.0h1v1h-1zM395.0,632.0h1v1h-1zM395.0,592.0h1v1h-1zM395.0,552.0h1v1h-1zM395.0,512.0h1v1h-1zM395.0,472.0h1v1h-1zM395.0,432.0h1v1h-1zM395.0,392.0h1v1h-1zM395.0,352.0h1v1h-1zM395.0,312.0h1v1h-1zM395.0,272.0h1v1h-1zM395.0,232.0h1v1h-1zM395.0,192.0h1v1h-1zM395.0,152.0h1v1h-1zM435.0,712.0h1v1h-1zM435.0,672.0h1v1h-1zM435.0,632.0h1v1h-1zM435.0,592.0h1v1h-1zM435.0,552.0h1v1h-1zM435.0,512.0h1v1h-1zM435.0,472.0h1v1h-1zM435.0,432.0h1v1h-1zM435.0,392.0h1v1h-1zM435.0,352.0h1v1h-1zM435.0,312.0h1v1h-1zM435.0,272.0h1v1h-1zM435.0,232.0h1v1h-1zM435.0,192.0h1v1h-1zM435.0,152.0h1v1h-1zM475.0,712.0h1v1h-1zM475.0,672.0h1v1h-1zM475.0,632.0h1v1h-1zM475.0,592.0h1v1h-1zM475.0,552.0h1v1h-1zM475.0,512.0h1v1h-1zM475.0,472.0h1v1h-1zM475.0,432.0h1v1h-1zM475.0,392.0h1v1h-1zM475.0,352.0h1v1h-1zM475.0,312.0h1v1h-1zM475.0,272.0h1v1h-1zM475.0,232.0h1v1h-1zM475.0,192.0h1v1h-1zM475.0,152.0h1v1h-1zM515.0,712.0h1v1h-1zM515.0,672.0h1v1h-1zM515.0,632.0h1v1h-1zM515.0,592.0h1v1h-1zM515.0,552.0h1v1h-1zM515.0,512.0h1v1h-1zM515.0,472.0h1v1h-1zM515.0,432.0h1v1h-1zM515.0,392.0h1v1h-1zM515.0,352.0h1v1h-1zM515.0,312.0h1v1h-1zM515.0,272.0h1v1h-1zM515.0,232.0h1v1h-1zM515.0,192.0h1v1h-1zM515.0,152.0h1v1h-1zM555.0,712.0h1v1h-1zM555.0,672.0h1v1h-1zM555.0,632.0h1v1h-1zM555.0,592.0h1v1h-1zM555.0,552.0h1v1h-1zM555.0,512.0h1v1h-1zM555.0,472.0h1v1h-1zM555.0,432.0h1v1h-1zM555.0,392.0h1v1h-1zM555.0,352.0h1v1h-1zM555.0,312.0h1v1h-1zM555.0,272.0h1v1h-1zM555.0,232.0h1v1h-1zM555.0,192.0h1v1h-1zM555.0,152.0h1v1h-1zM595.0,712.0h1v1h-1zM595.0,672.0h1v1h-1zM595.0,632.0h1v1h-1zM595.0,592.0h1v1h-1zM595.0,552.0h1v1h-1zM595.0,512.0h1v1h-1zM595.0,472.0h1v1h-1zM595.0,432.0h1v1h-1zM595.0,392.0h1v1h-1zM595.0,352.0h1v1h-1zM595.0,312.0h1v1h-1zM595.0,272.0h1v1h-1zM595.0,232.0h1v1h-1zM595.0,192.0h1v1h-1zM595.0,152.0h1v1h-1zM635.0,712.0h1v1h-1zM635.0,672.0h1v1h-1zM635.0,632.0h1v1h-1zM635.0,592.0h1v1h-1zM635.0,552.0h1v1h-1zM635.0,512.0h1v1h-1zM635.0,472.0h1v1h-1zM635.0,432.0h1v1h-1zM635.0,392.0h1v1h-1zM635.0,352.0h1v1h-1zM635.0,312.0h1v1h-1zM635.0,272.0h1v1h-1zM635.0,232.0h1v1h-1zM635.0,192.0h1v1h-1zM635.0,152.0h1v1h-1zM675.0,712.0h1v1h-1zM675.0,672.0h1v1h-1zM675.0,632.0h1v1h-1zM675.0,592.0h1v1h-1zM675.0,552.0h1v1h-1zM675.0,512.0h1v1h-1zM675.0,472.0h1v1h-1zM675.0,432.0h1v1h-1zM675.0,392.0h1v1h-1zM675.0,352.0h1v1h-1zM675.0,312.0h1v1h-1zM675.0,272.0h1v1h-1zM675.0,232.0h1v1h-1zM675.0,192.0h1v1h-1zM675.0,152.0h1v1h-1zM715.0,712.0h1v1h-1zM715.0,672.0h1v1h-1zM715.0,632.0h1v1h-1zM715.0,592.0h1v1h-1zM715.0,552.0h1v1h-1zM715.0,512.0h1v1h-1zM715.0,472.0h1v1h-1zM715.0,432.0h1v1h-1zM715.0,392.0h1v1h-1zM715.0,352.0h1v1h-1zM715.0,312.0h1v1h-1zM715.0,272.0h1v1h-1zM715.0,232.0h1v1h-1zM715.0,192.0h1v1h-1zM715.0,152.0h1v1h-1zM755.0,712.0h1v1h-1zM755.0,672.0h1v1h-1zM755.0,632.0h1v1h-1zM755.0,592.0h1v1h-1zM755.0,552.0h1v1h-1zM755.0,512.0h1v1h-1zM755.0,472.0h1v1h-1zM755.0,432.0h1v1h-1zM755.0,392.0h1v1h-1zM755.0,352.0h1v1h-1zM755.0,312.0h1v1h-1zM755.0,272.0h1v1h-1zM755.0,232.0h1v1h-1zM755.0,192.0h1v1h-1zM755.0,152.0h1v1h-1zM795.0,712.0h1v1h-1zM795.0,672.0h1v1h-1zM795.0,632.0h1v1h-1zM795.0,592.0h1v1h-1zM795.0,552.0h1v1h-1zM795.0,512.0h1v1h-1zM795.0,472.0h1v1h-1zM795.0,432.0h1v1h-1zM795.0,392.0h1v1h-1zM795.0,352.0h1v1h-1zM795.0,312.0h1v1h-1zM795.0,272.0h1v1h-1zM795.0,232.0h1v1h-1zM795.0,192.0h1v1h-1zM795.0,152.0h1v1h-1zM835.0,712.0h1v1h-1zM835.0,672.0h1v1h-1zM835.0,632.0h1v1h-1zM835.0,592.0h1v1h-1zM835.0,552.0h1v1h-1zM835.0,512.0h1v1h-1zM835.0,472.0h1v1h-1zM835.0,432.0h1v1h-1zM835.0,392.0h1v1h-1zM835.0,352.0h1v1h-1zM835.0,312.0h1v1h-1zM835.0,272.0h1v1h-1zM835.0,232.0h1v1h-1zM835.0,192.0h1v1h-1zM835.0,152.0h1v1h-1zM875.0,712.0h1v1h-1zM875.0,672.0h1v1h-1zM875.0,632.0h1v1h-1zM875.0,592.0h1v1h-1zM875.0,552.0h1v1h-1zM875.0,512.0h1v1h-1zM875.0,472.0h1v1h-1zM875.0,432.0h1v1h-1zM875.0,392.0h1v1h-1zM875.0,352.0h1v1h-1zM875.0,312.0h1v1h-1zM875.0,272.0h1v1h-1zM875.0,232.0h1v1h-1zM875.0,192.0h1v1h-1zM875.0,152.0h1v1h-1zM915.0,712.0h1v1h-1zM915.0,672.0h1v1h-1zM915.0,632.0h1v1h-1zM915.0,592.0h1v1h-1zM915.0,552.0h1v1h-1zM915.0,512.0h1v1h-1zM915.0,472.0h1v1h-1zM915.0,432.0h1v1h-1zM915.0,392.0h1v1h-1zM915.0,352.0h1v1h-1zM915.0,312.0h1v1h-1zM915.0,272.0h1v1h-1zM915.0,232.0h1v1h-1zM915.0,192.0h1v1h-1zM915.0,152.0h1v1h-1zM955.0,712.0h1v1h-1zM955.0,672.0h1v1h-1zM955.0,632.0h1v1h-1zM955.0,592.0h1v1h-1zM955.0,552.0h1v1h-1zM955.0,512.0h1v1h-1zM955.0,472.0h1v1h-1zM955.0,432.0h1v1h-1zM955.0,392.0h1v1h-1zM955.0,352.0h1v1h-1zM955.0,312.0h1v1h-1zM955.0,272.0h1v1h-1zM955.0,232.0h1v1h-1zM955.0,192.0h1v1h-1zM955.0,152.0h1v1h-1zM995.0,712.0h1v1h-1zM995.0,672.0h1v1h-1zM995.0,632.0h1v1h-1zM995.0,592.0h1v1h-1zM995.0,552.0h1v1h-1zM995.0,512.0h1v1h-1zM995.0,472.0h1v1h-1zM995.0,432.0h1v1h-1zM995.0,392.0h1v1h-1zM995.0,352.0h1v1h-1zM995.0,312.0h1v1h-1zM995.0,272.0h1v1h-1zM995.0,232.0h1v1h-1zM995.0,192.0h1v1h-1zM995.0,152.0h1v1h-1zM1035.0,712.0h1v1h-1zM1035.0,672.0h1v1h-1zM1035.0,632.0h1v1h-1zM1035.0,592.0h1v1h-1zM1035.0,552.0h1v1h-1zM1035.0,512.0h1v1h-1zM1035.0,472.0h1v1h-1zM1035.0,432.0h1v1h-1zM1035.0,392.0h1v1h-1zM1035.0,352.0h1v1h-1zM1035.0,312.0h1v1h-1zM1035.0,272.0h1v1h-1zM1035.0,232.0h1v1h-1zM1035.0,192.0h1v1h-1zM1035.0,152.0h1v1h-1zM1075.0,712.0h1v1h-1zM1075.0,672.0h1v1h-1zM1075.0,632.0h1v1h-1zM1075.0,592.0h1v1h-1zM1075.0,552.0h1v1h-1zM1075.0,512.0h1v1h-1zM1075.0,472.0h1v1h-1zM1075.0,432.0h1v1h-1zM1075.0,392.0h1v1h-1zM1075.0,352.0h1v1h-1zM1075.0,312.0h1v1h-1zM1075.0,272.0h1v1h-1zM1075.0,232.0h1v1h-1zM1075.0,192.0h1v1h-1zM1075.0,152.0h1v1h-1zM1115.0,712.0h1v1h-1zM1115.0,672.0h1v1h-1zM1115.0,632.0h1v1h-1zM1115.0,592.0h1v1h-1zM1115.0,552.0h1v1h-1zM1115.0,512.0h1v1h-1zM1115.0,472.0h1v1h-1zM1115.0,432.0h1v1h-1zM1115.0,392.0h1v1h-1zM1115.0,352.0h1v1h-1zM1115.0,312.0h1v1h-1zM1115.0,272.0h1v1h-1zM1115.0,232.0h1v1h-1zM1115.0,192.0h1v1h-1zM1115.0,152.0h1v1h-1z" fill="#3a3a3a"/>
<path d="M175,632.5H195.5V652" fill="none" stroke="#8a0a0a" stroke-width="1.3"/>
<line x1="95" y1="592" x2="1138" y2="592" stroke="#221a00" stroke-width="2"/>
<line x1="475" y1="155" x2="475" y2="732" stroke="#221a00" stroke-width="2"/>
<path d="M211.30,632.40 A16.00,16.00 0 0 1 195.30,616.40 L195.30,535.90 A16.00,16.00 0 0 1 211.30,519.90 L263.80,519.90 A26.00,26.00 0 0 1 277.49,523.79 L377.93,585.96 A20.00,20.00 0 0 1 387.40,602.97 L387.40,616.40 A16.00,16.00 0 0 1 371.40,632.40 Z" fill="none" stroke="#86403a" stroke-width="1.1"/>
<path d="M211.30,627.80 A11.40,11.40 0 0 1 199.90,616.40 L199.90,535.90 A11.40,11.40 0 0 1 211.30,524.50 L263.80,524.50 A21.40,21.40 0 0 1 275.07,527.70 L375.51,589.88 A15.40,15.40 0 0 1 382.80,602.97 L382.80,616.40 A11.40,11.40 0 0 1 371.40,627.80 Z" fill="none" stroke="#86403a" stroke-width="0.9"/>
<circle cx="211.3" cy="536.4" r="4.0" fill="none" stroke="#86403a" stroke-width="1.1"/>
<path d="M191.3,536.4h40M211.3,516.4v40" stroke="#5a2622" stroke-width="0.9" stroke-dasharray="5,2,1.5,2" fill="none"/>
<circle cx="211.3" cy="616.4" r="4.0" fill="none" stroke="#86403a" stroke-width="1.1"/>
<path d="M191.3,616.4h40M211.3,596.4v40" stroke="#5a2622" stroke-width="0.9" stroke-dasharray="5,2,1.5,2" fill="none"/>
<circle cx="371.3" cy="616.4" r="4.0" fill="none" stroke="#86403a" stroke-width="1.1"/>
<path d="M351.3,616.4h40M371.3,596.4v40" stroke="#5a2622" stroke-width="0.9" stroke-dasharray="5,2,1.5,2" fill="none"/>
<circle cx="259.3" cy="556.4" r="12.8" fill="none" stroke="#86403a" stroke-width="1.1"/>
<path d="M238.3,556.4h42M259.3,535.4v42" stroke="#5a2622" stroke-width="0.9" stroke-dasharray="5,2,1.5,2" fill="none"/>
<circle cx="323.3" cy="596.4" r="12.8" fill="none" stroke="#86403a" stroke-width="1.1"/>
<path d="M302.3,596.4h42M323.3,575.4v42" stroke="#5a2622" stroke-width="0.9" stroke-dasharray="5,2,1.5,2" fill="none"/>
<path d="M411.30,632.40 A16.00,16.00 0 0 1 395.30,616.40 L395.30,535.90 A16.00,16.00 0 0 1 411.30,519.90 L463.80,519.90 A26.00,26.00 0 0 1 477.49,523.79 L577.93,585.96 A20.00,20.00 0 0 1 587.40,602.97 L587.40,616.40 A16.00,16.00 0 0 1 571.40,632.40 Z" fill="none" stroke="#86403a" stroke-width="1.1"/>
<path d="M411.30,627.80 A11.40,11.40 0 0 1 399.90,616.40 L399.90,535.90 A11.40,11.40 0 0 1 411.30,524.50 L463.80,524.50 A21.40,21.40 0 0 1 475.07,527.70 L575.51,589.88 A15.40,15.40 0 0 1 582.80,602.97 L582.80,616.40 A11.40,11.40 0 0 1 571.40,627.80 Z" fill="none" stroke="#86403a" stroke-width="0.9"/>
<circle cx="411.3" cy="536.4" r="4.0" fill="none" stroke="#86403a" stroke-width="1.1"/>
<path d="M391.3,536.4h40M411.3,516.4v40" stroke="#5a2622" stroke-width="0.9" stroke-dasharray="5,2,1.5,2" fill="none"/>
<circle cx="411.3" cy="616.4" r="4.0" fill="none" stroke="#86403a" stroke-width="1.1"/>
<path d="M391.3,616.4h40M411.3,596.4v40" stroke="#5a2622" stroke-width="0.9" stroke-dasharray="5,2,1.5,2" fill="none"/>
<circle cx="571.3" cy="616.4" r="4.0" fill="none" stroke="#86403a" stroke-width="1.1"/>
<path d="M551.3,616.4h40M571.3,596.4v40" stroke="#5a2622" stroke-width="0.9" stroke-dasharray="5,2,1.5,2" fill="none"/>
<circle cx="459.3" cy="556.4" r="12.8" fill="none" stroke="#86403a" stroke-width="1.1"/>
<path d="M438.3,556.4h42M459.3,535.4v42" stroke="#5a2622" stroke-width="0.9" stroke-dasharray="5,2,1.5,2" fill="none"/>
<circle cx="523.3" cy="596.4" r="12.8" fill="none" stroke="#86403a" stroke-width="1.1"/>
<path d="M502.3,596.4h42M523.3,575.4v42" stroke="#5a2622" stroke-width="0.9" stroke-dasharray="5,2,1.5,2" fill="none"/>
<circle cx="275" cy="591.8" r="5" fill="none" stroke="#a01010" stroke-width="1.2"/><path d="M269,591.8h12M275,585.8v12" stroke="#a01010" stroke-width="1"/>
<rect x="206.0" y="510.3" width="10" height="10" fill="#0000b4" stroke="#ffffff" stroke-opacity="0.28" stroke-width="0.7"/>
<rect x="206.0" y="519.6" width="10" height="10" fill="#0000b4" stroke="#ffffff" stroke-opacity="0.28" stroke-width="0.7"/>
<rect x="194.0" y="519.6" width="10" height="10" fill="#0f8bba" stroke="#ffffff" stroke-opacity="0.28" stroke-width="0.7"/>
<rect x="198.2" y="523.2" width="10" height="10" fill="#0f8bba" stroke="#ffffff" stroke-opacity="0.28" stroke-width="0.7"/>
<rect x="185.3" y="530.7" width="10" height="10" fill="#c40a2e" stroke="#ffffff" stroke-opacity="0.28" stroke-width="0.7"/>
<rect x="194.6" y="530.7" width="10" height="10" fill="#0000b4" stroke="#ffffff" stroke-opacity="0.28" stroke-width="0.7"/>
<rect x="209.8" y="530.7" width="10" height="10" fill="#0f8bba" stroke="#ffffff" stroke-opacity="0.28" stroke-width="0.7"/>
<rect x="206.0" y="534.8" width="10" height="10" fill="#0f8bba" stroke="#ffffff" stroke-opacity="0.28" stroke-width="0.7"/>
<rect x="233.4" y="519.6" width="10" height="10" fill="#0f8bba" stroke="#ffffff" stroke-opacity="0.28" stroke-width="0.7"/>
<rect x="225.6" y="530.7" width="10" height="10" fill="#0000b4" stroke="#ffffff" stroke-opacity="0.28" stroke-width="0.7"/>
<rect x="206.0" y="550.6" width="10" height="10" fill="#c40a2e" stroke="#ffffff" stroke-opacity="0.28" stroke-width="0.7"/>
<rect x="194.6" y="571.0" width="10" height="10" fill="#0f8bba" stroke="#ffffff" stroke-opacity="0.28" stroke-width="0.7"/>
<rect x="206.0" y="590.9" width="10" height="10" fill="#0000b4" stroke="#ffffff" stroke-opacity="0.28" stroke-width="0.7"/>
<rect x="270.0" y="516.8" width="10" height="10" fill="#c40a2e" stroke="#ffffff" stroke-opacity="0.28" stroke-width="0.7"/>
<rect x="261.2" y="514.5" width="10" height="10" fill="#0000b4" stroke="#ffffff" stroke-opacity="0.28" stroke-width="0.7"/>
<rect x="267.0" y="514.5" width="10" height="10" fill="#0f8bba" stroke="#ffffff" stroke-opacity="0.28" stroke-width="0.7"/>
<rect x="265.5" y="520.5" width="10" height="10" fill="#0000b4" stroke="#ffffff" stroke-opacity="0.28" stroke-width="0.7"/>
<rect x="264.3" y="520.3" width="10" height="10" fill="#0f8bba" stroke="#ffffff" stroke-opacity="0.28" stroke-width="0.7"/>
<rect x="253.0" y="530.7" width="10" height="10" fill="#0000b4" stroke="#ffffff" stroke-opacity="0.28" stroke-width="0.7"/>
<rect x="253.8" y="539.3" width="10" height="10" fill="#0f8bba" stroke="#ffffff" stroke-opacity="0.28" stroke-width="0.7"/>
<rect x="253.8" y="562.7" width="10" height="10" fill="#0f8bba" stroke="#ffffff" stroke-opacity="0.28" stroke-width="0.7"/>
<rect x="242.2" y="550.6" width="10" height="10" fill="#0f8bba" stroke="#ffffff" stroke-opacity="0.28" stroke-width="0.7"/>
<rect x="265.4" y="550.6" width="10" height="10" fill="#0f8bba" stroke="#ffffff" stroke-opacity="0.28" stroke-width="0.7"/>
<rect x="233.0" y="550.6" width="10" height="10" fill="#c40a2e" stroke="#ffffff" stroke-opacity="0.28" stroke-width="0.7"/>
<rect x="253.8" y="571.6" width="10" height="10" fill="#c40a2e" stroke="#ffffff" stroke-opacity="0.28" stroke-width="0.7"/>
<rect x="274.5" y="550.6" width="10" height="10" fill="#0000b4" stroke="#ffffff" stroke-opacity="0.28" stroke-width="0.7"/>
<rect x="318.0" y="579.3" width="10" height="10" fill="#0f8bba" stroke="#ffffff" stroke-opacity="0.28" stroke-width="0.7"/>
<rect x="318.0" y="602.5" width="10" height="10" fill="#0f8bba" stroke="#ffffff" stroke-opacity="0.28" stroke-width="0.7"/>
<rect x="306.9" y="590.9" width="10" height="10" fill="#0f8bba" stroke="#ffffff" stroke-opacity="0.28" stroke-width="0.7"/>
<rect x="329.4" y="590.9" width="10" height="10" fill="#0f8bba" stroke="#ffffff" stroke-opacity="0.28" stroke-width="0.7"/>
<rect x="296.9" y="590.9" width="10" height="10" fill="#c40a2e" stroke="#ffffff" stroke-opacity="0.28" stroke-width="0.7"/>
<rect x="318.0" y="611.4" width="10" height="10" fill="#c40a2e" stroke="#ffffff" stroke-opacity="0.28" stroke-width="0.7"/>
<rect x="338.8" y="590.9" width="10" height="10" fill="#0000b4" stroke="#ffffff" stroke-opacity="0.28" stroke-width="0.7"/>
<rect x="318.0" y="570.0" width="10" height="10" fill="#0000b4" stroke="#ffffff" stroke-opacity="0.28" stroke-width="0.7"/>
<rect x="319.3" y="553.9" width="10" height="10" fill="#0f8bba" stroke="#ffffff" stroke-opacity="0.28" stroke-width="0.7"/>
<rect x="345.8" y="610.8" width="10" height="10" fill="#c40a2e" stroke="#ffffff" stroke-opacity="0.28" stroke-width="0.7"/>
<rect x="185.3" y="610.8" width="10" height="10" fill="#c40a2e" stroke="#ffffff" stroke-opacity="0.28" stroke-width="0.7"/>
<rect x="194.6" y="610.8" width="10" height="10" fill="#0000b4" stroke="#ffffff" stroke-opacity="0.28" stroke-width="0.7"/>
<rect x="206.0" y="607.0" width="10" height="10" fill="#0f8bba" stroke="#ffffff" stroke-opacity="0.28" stroke-width="0.7"/>
<rect x="209.8" y="610.8" width="10" height="10" fill="#0f8bba" stroke="#ffffff" stroke-opacity="0.28" stroke-width="0.7"/>
<rect x="198.2" y="618.6" width="10" height="10" fill="#0f8bba" stroke="#ffffff" stroke-opacity="0.28" stroke-width="0.7"/>
<rect x="194.6" y="622.7" width="10" height="10" fill="#0f8bba" stroke="#ffffff" stroke-opacity="0.28" stroke-width="0.7"/>
<rect x="205.8" y="622.3" width="10" height="10" fill="#0000b4" stroke="#ffffff" stroke-opacity="0.28" stroke-width="0.7"/>
<rect x="205.8" y="631.4" width="10" height="10" fill="#c40a2e" stroke="#ffffff" stroke-opacity="0.28" stroke-width="0.7"/>
<rect x="226.0" y="610.8" width="10" height="10" fill="#0000b4" stroke="#ffffff" stroke-opacity="0.28" stroke-width="0.7"/>
<rect x="285.8" y="622.4" width="10" height="10" fill="#0f8bba" stroke="#ffffff" stroke-opacity="0.28" stroke-width="0.7"/>
<rect x="365.1" y="590.9" width="10" height="10" fill="#0000b4" stroke="#ffffff" stroke-opacity="0.28" stroke-width="0.7"/>
<rect x="374.7" y="582.0" width="10" height="10" fill="#c40a2e" stroke="#ffffff" stroke-opacity="0.28" stroke-width="0.7"/>
<rect x="371.2" y="586.7" width="10" height="10" fill="#c40a2e" stroke="#ffffff" stroke-opacity="0.28" stroke-width="0.7"/>
<rect x="379.6" y="587.8" width="10" height="10" fill="#0f8bba" stroke="#ffffff" stroke-opacity="0.28" stroke-width="0.7"/>
<rect x="382.8" y="596.3" width="10" height="10" fill="#0000b4" stroke="#ffffff" stroke-opacity="0.28" stroke-width="0.7"/>
<rect x="376.0" y="594.0" width="10" height="10" fill="#0000b4" stroke="#ffffff" stroke-opacity="0.28" stroke-width="0.7"/>
<rect x="375.3" y="596.0" width="10" height="10" fill="#0f8bba" stroke="#ffffff" stroke-opacity="0.28" stroke-width="0.7"/>
<rect x="376.5" y="603.3" width="10" height="10" fill="#0f8bba" stroke="#ffffff" stroke-opacity="0.28" stroke-width="0.7"/>
<rect x="376.8" y="612.0" width="10" height="10" fill="#0000b4" stroke="#ffffff" stroke-opacity="0.28" stroke-width="0.7"/>
<rect x="365.4" y="606.7" width="10" height="10" fill="#0f8bba" stroke="#ffffff" stroke-opacity="0.28" stroke-width="0.7"/>
<rect x="361.7" y="610.8" width="10" height="10" fill="#0f8bba" stroke="#ffffff" stroke-opacity="0.28" stroke-width="0.7"/>
<rect x="365.0" y="613.6" width="10" height="10" fill="#0f8bba" stroke="#ffffff" stroke-opacity="0.28" stroke-width="0.7"/>
<rect x="386.5" y="610.8" width="10" height="10" fill="#0000b4" stroke="#ffffff" stroke-opacity="0.28" stroke-width="0.7"/>
<rect x="376.5" y="622.1" width="10" height="10" fill="#0f8bba" stroke="#ffffff" stroke-opacity="0.28" stroke-width="0.7"/>
<rect x="373.4" y="618.5" width="10" height="10" fill="#0f8bba" stroke="#ffffff" stroke-opacity="0.28" stroke-width="0.7"/>
<rect x="365.6" y="622.3" width="10" height="10" fill="#0000b4" stroke="#ffffff" stroke-opacity="0.28" stroke-width="0.7"/>
<rect x="365.6" y="631.7" width="10" height="10" fill="#c40a2e" stroke="#ffffff" stroke-opacity="0.28" stroke-width="0.7"/>
<rect x="345.4" y="610.8" width="10" height="10" fill="#c40a2e" stroke="#ffffff" stroke-opacity="0.28" stroke-width="0.7"/>
<circle cx="258.8" cy="555.6" r="5" fill="#0000b4" stroke="#ffffff" stroke-opacity="0.25" stroke-width="0.7"/>
<circle cx="323.0" cy="595.9" r="5" fill="#0000b4" stroke="#ffffff" stroke-opacity="0.25" stroke-width="0.7"/>
<circle cx="266.2" cy="535.7" r="5" fill="#0000b4" stroke="#ffffff" stroke-opacity="0.25" stroke-width="0.7"/>
<circle cx="370.9" cy="601.4" r="5" fill="#0000b4" stroke="#ffffff" stroke-opacity="0.25" stroke-width="0.7"/>
<line x1="95" y1="592.0" x2="1138" y2="592.0" stroke="#6a5006" stroke-width="2" stroke-dasharray="4,2" stroke-opacity="0.75"/>
<line x1="475.0" y1="155" x2="475.0" y2="732" stroke="#6a5006" stroke-width="2" stroke-dasharray="4,2" stroke-opacity="0.75"/>
<circle cx="475.3" cy="592.4" r="40" fill="none" stroke="#52667a" stroke-opacity="0.3" stroke-width="1.05"/>
<circle cx="475.3" cy="592.4" r="39" fill="none" stroke="#74899c" stroke-opacity="0.7" stroke-width="1.05"/>
<circle cx="475.3" cy="592.4" r="38" fill="none" stroke="#889daf" stroke-opacity="0.85" stroke-width="1.05"/>
<circle cx="475.3" cy="592.4" r="37" fill="none" stroke="#8499aa" stroke-opacity="0.85" stroke-width="1.05"/>
<circle cx="475.3" cy="592.4" r="36" fill="none" stroke="#7b90a2" stroke-opacity="0.8" stroke-width="1.05"/>
<circle cx="475.3" cy="592.4" r="35" fill="none" stroke="#6f8497" stroke-opacity="0.7" stroke-width="1.05"/>
<circle cx="475.3" cy="592.4" r="34" fill="none" stroke="#63778a" stroke-opacity="0.55" stroke-width="1.05"/>
<circle cx="475.3" cy="592.4" r="33" fill="none" stroke="#56697b" stroke-opacity="0.4" stroke-width="1.05"/>
<circle cx="475.3" cy="592.4" r="32" fill="none" stroke="#485a6a" stroke-opacity="0.28" stroke-width="1.05"/>
<circle cx="475.3" cy="592.4" r="31" fill="none" stroke="#3a4a58" stroke-opacity="0.18" stroke-width="1.05"/>
<circle cx="475.3" cy="592.4" r="30" fill="none" stroke="#2c3844" stroke-opacity="0.1" stroke-width="1.05"/>
<path d="M460.3,592.4h30M475.3,577.4v30" stroke="#c6c6c6" stroke-width="3.7"/>
<circle cx="475.3" cy="592.4" r="4" fill="none" stroke="#c8a000" stroke-width="0.8" stroke-dasharray="1.5,1"/>
<circle cx="475.3" cy="592.4" r="1.6" fill="#9a7412"/>
<text x="483" y="610" font-family="Liberation Sans" font-size="14" fill="#f0c418">Griglia</text>
</g>
<text x="115.3" y="141" font-size="9.6" fill="#1a1a1a" text-anchor="middle" font-family="Liberation Sans">-20</text>
<line x1="115.5" y1="148" x2="115.5" y2="155" stroke="#5a5a5a" stroke-width="1"/>
<text x="155.3" y="141" font-size="9.6" fill="#1a1a1a" text-anchor="middle" font-family="Liberation Sans">-10</text>
<line x1="155.5" y1="148" x2="155.5" y2="155" stroke="#5a5a5a" stroke-width="1"/>
<text x="195.3" y="141" font-size="9.6" fill="#1a1a1a" text-anchor="middle" font-family="Liberation Sans">0</text>
<line x1="195.5" y1="148" x2="195.5" y2="155" stroke="#5a5a5a" stroke-width="1"/>
<text x="235.3" y="141" font-size="9.6" fill="#1a1a1a" text-anchor="middle" font-family="Liberation Sans">10</text>
<line x1="235.5" y1="148" x2="235.5" y2="155" stroke="#5a5a5a" stroke-width="1"/>
<text x="275.3" y="141" font-size="9.6" fill="#1a1a1a" text-anchor="middle" font-family="Liberation Sans">20</text>
<line x1="275.5" y1="148" x2="275.5" y2="155" stroke="#5a5a5a" stroke-width="1"/>
<text x="315.3" y="141" font-size="9.6" fill="#1a1a1a" text-anchor="middle" font-family="Liberation Sans">30</text>
<line x1="315.5" y1="148" x2="315.5" y2="155" stroke="#5a5a5a" stroke-width="1"/>
<text x="355.3" y="141" font-size="9.6" fill="#1a1a1a" text-anchor="middle" font-family="Liberation Sans">40</text>
<line x1="355.5" y1="148" x2="355.5" y2="155" stroke="#5a5a5a" stroke-width="1"/>
<text x="395.3" y="141" font-size="9.6" fill="#1a1a1a" text-anchor="middle" font-family="Liberation Sans">50</text>
<line x1="395.5" y1="148" x2="395.5" y2="155" stroke="#5a5a5a" stroke-width="1"/>
<text x="435.3" y="141" font-size="9.6" fill="#1a1a1a" text-anchor="middle" font-family="Liberation Sans">60</text>
<line x1="435.5" y1="148" x2="435.5" y2="155" stroke="#5a5a5a" stroke-width="1"/>
<text x="475.3" y="141" font-size="9.6" fill="#1a1a1a" text-anchor="middle" font-family="Liberation Sans">70</text>
<line x1="475.5" y1="148" x2="475.5" y2="155" stroke="#5a5a5a" stroke-width="1"/>
<text x="515.3" y="141" font-size="9.6" fill="#1a1a1a" text-anchor="middle" font-family="Liberation Sans">80</text>
<line x1="515.5" y1="148" x2="515.5" y2="155" stroke="#5a5a5a" stroke-width="1"/>
<text x="555.3" y="141" font-size="9.6" fill="#1a1a1a" text-anchor="middle" font-family="Liberation Sans">90</text>
<line x1="555.5" y1="148" x2="555.5" y2="155" stroke="#5a5a5a" stroke-width="1"/>
<text x="595.3" y="141" font-size="9.6" fill="#1a1a1a" text-anchor="middle" font-family="Liberation Sans">100</text>
<line x1="595.5" y1="148" x2="595.5" y2="155" stroke="#5a5a5a" stroke-width="1"/>
<text x="635.3" y="141" font-size="9.6" fill="#1a1a1a" text-anchor="middle" font-family="Liberation Sans">110</text>
<line x1="635.5" y1="148" x2="635.5" y2="155" stroke="#5a5a5a" stroke-width="1"/>
<text x="675.3" y="141" font-size="9.6" fill="#1a1a1a" text-anchor="middle" font-family="Liberation Sans">120</text>
<line x1="675.5" y1="148" x2="675.5" y2="155" stroke="#5a5a5a" stroke-width="1"/>
<text x="715.3" y="141" font-size="9.6" fill="#1a1a1a" text-anchor="middle" font-family="Liberation Sans">130</text>
<line x1="715.5" y1="148" x2="715.5" y2="155" stroke="#5a5a5a" stroke-width="1"/>
<text x="755.3" y="141" font-size="9.6" fill="#1a1a1a" text-anchor="middle" font-family="Liberation Sans">140</text>
<line x1="755.5" y1="148" x2="755.5" y2="155" stroke="#5a5a5a" stroke-width="1"/>
<text x="795.3" y="141" font-size="9.6" fill="#1a1a1a" text-anchor="middle" font-family="Liberation Sans">150</text>
<line x1="795.5" y1="148" x2="795.5" y2="155" stroke="#5a5a5a" stroke-width="1"/>
<text x="835.3" y="141" font-size="9.6" fill="#1a1a1a" text-anchor="middle" font-family="Liberation Sans">160</text>
<line x1="835.5" y1="148" x2="835.5" y2="155" stroke="#5a5a5a" stroke-width="1"/>
<text x="875.3" y="141" font-size="9.6" fill="#1a1a1a" text-anchor="middle" font-family="Liberation Sans">170</text>
<line x1="875.5" y1="148" x2="875.5" y2="155" stroke="#5a5a5a" stroke-width="1"/>
<text x="915.3" y="141" font-size="9.6" fill="#1a1a1a" text-anchor="middle" font-family="Liberation Sans">180</text>
<line x1="915.5" y1="148" x2="915.5" y2="155" stroke="#5a5a5a" stroke-width="1"/>
<text x="955.3" y="141" font-size="9.6" fill="#1a1a1a" text-anchor="middle" font-family="Liberation Sans">190</text>
<line x1="955.5" y1="148" x2="955.5" y2="155" stroke="#5a5a5a" stroke-width="1"/>
<text x="995.3" y="141" font-size="9.6" fill="#1a1a1a" text-anchor="middle" font-family="Liberation Sans">200</text>
<line x1="995.5" y1="148" x2="995.5" y2="155" stroke="#5a5a5a" stroke-width="1"/>
<text x="1035.3" y="141" font-size="9.6" fill="#1a1a1a" text-anchor="middle" font-family="Liberation Sans">210</text>
<line x1="1035.5" y1="148" x2="1035.5" y2="155" stroke="#5a5a5a" stroke-width="1"/>
<text x="1075.3" y="141" font-size="9.6" fill="#1a1a1a" text-anchor="middle" font-family="Liberation Sans">220</text>
<line x1="1075.5" y1="148" x2="1075.5" y2="155" stroke="#5a5a5a" stroke-width="1"/>
<text x="1115.3" y="141" font-size="9.6" fill="#1a1a1a" text-anchor="middle" font-family="Liberation Sans">230</text>
<line x1="1115.5" y1="148" x2="1115.5" y2="155" stroke="#5a5a5a" stroke-width="1"/>
<clipPath id="lr"><rect x="72" y="155" width="23" height="577"/></clipPath><g clip-path="url(#lr)">
<text transform="translate(80.6,712.4) rotate(-90)" font-size="9.6" fill="#1a1a1a" text-anchor="middle" font-family="Liberation Sans">-20</text>
<line x1="88" y1="712.5" x2="95" y2="712.5" stroke="#5a5a5a" stroke-width="1"/>
<text transform="translate(80.6,672.4) rotate(-90)" font-size="9.6" fill="#1a1a1a" text-anchor="middle" font-family="Liberation Sans">-10</text>
<line x1="88" y1="672.5" x2="95" y2="672.5" stroke="#5a5a5a" stroke-width="1"/>
<text transform="translate(80.6,632.4) rotate(-90)" font-size="9.6" fill="#1a1a1a" text-anchor="middle" font-family="Liberation Sans">0</text>
<line x1="88" y1="632.5" x2="95" y2="632.5" stroke="#5a5a5a" stroke-width="1"/>
<text transform="translate(80.6,592.4) rotate(-90)" font-size="9.6" fill="#1a1a1a" text-anchor="middle" font-family="Liberation Sans">10</text>
<line x1="88" y1="592.5" x2="95" y2="592.5" stroke="#5a5a5a" stroke-width="1"/>
<text transform="translate(80.6,552.4) rotate(-90)" font-size="9.6" fill="#1a1a1a" text-anchor="middle" font-family="Liberation Sans">20</text>
<line x1="88" y1="552.5" x2="95" y2="552.5" stroke="#5a5a5a" stroke-width="1"/>
<text transform="translate(80.6,512.4) rotate(-90)" font-size="9.6" fill="#1a1a1a" text-anchor="middle" font-family="Liberation Sans">30</text>
<line x1="88" y1="512.5" x2="95" y2="512.5" stroke="#5a5a5a" stroke-width="1"/>
<text transform="translate(80.6,472.4) rotate(-90)" font-size="9.6" fill="#1a1a1a" text-anchor="middle" font-family="Liberation Sans">40</text>
<line x1="88" y1="472.5" x2="95" y2="472.5" stroke="#5a5a5a" stroke-width="1"/>
<text transform="translate(80.6,432.4) rotate(-90)" font-size="9.6" fill="#1a1a1a" text-anchor="middle" font-family="Liberation Sans">50</text>
<line x1="88" y1="432.5" x2="95" y2="432.5" stroke="#5a5a5a" stroke-width="1"/>
<text transform="translate(80.6,392.4) rotate(-90)" font-size="9.6" fill="#1a1a1a" text-anchor="middle" font-family="Liberation Sans">60</text>
<line x1="88" y1="392.5" x2="95" y2="392.5" stroke="#5a5a5a" stroke-width="1"/>
<text transform="translate(80.6,352.4) rotate(-90)" font-size="9.6" fill="#1a1a1a" text-anchor="middle" font-family="Liberation Sans">70</text>
<line x1="88" y1="352.5" x2="95" y2="352.5" stroke="#5a5a5a" stroke-width="1"/>
<text transform="translate(80.6,312.4) rotate(-90)" font-size="9.6" fill="#1a1a1a" text-anchor="middle" font-family="Liberation Sans">80</text>
<line x1="88" y1="312.5" x2="95" y2="312.5" stroke="#5a5a5a" stroke-width="1"/>
<text transform="translate(80.6,272.4) rotate(-90)" font-size="9.6" fill="#1a1a1a" text-anchor="middle" font-family="Liberation Sans">90</text>
<line x1="88" y1="272.5" x2="95" y2="272.5" stroke="#5a5a5a" stroke-width="1"/>
<text transform="translate(80.6,232.4) rotate(-90)" font-size="9.6" fill="#1a1a1a" text-anchor="middle" font-family="Liberation Sans">100</text>
<line x1="88" y1="232.5" x2="95" y2="232.5" stroke="#5a5a5a" stroke-width="1"/>
<text transform="translate(80.6,192.4) rotate(-90)" font-size="9.6" fill="#1a1a1a" text-anchor="middle" font-family="Liberation Sans">110</text>
<line x1="88" y1="192.5" x2="95" y2="192.5" stroke="#5a5a5a" stroke-width="1"/>
<text transform="translate(80.6,152.4) rotate(-90)" font-size="9.6" fill="#1a1a1a" text-anchor="middle" font-family="Liberation Sans">120</text>
<line x1="88" y1="152.5" x2="95" y2="152.5" stroke="#5a5a5a" stroke-width="1"/>
</g>
<path d="M469.8,145h11l-5.5,5.5z" fill="#000"/><line x1="475.5" y1="150" x2="475.5" y2="155" stroke="#5a5a5a"/>
<path d="M85,586.9v11l6,-5.5z" fill="#111"/>
</svg><div class="a" style="left:1155px;top:108px;width:299px;height:691px;background:#fff;border-left:1px solid #c4c4c4;border-bottom:1px solid #c4c4c4"></div><div class="a" style="left:1156px;top:108px;width:298px;height:22px;background:linear-gradient(#ececec,#e2e2e2);border-top:1px solid #c8c8c8;border-bottom:1px solid #cfcfcf"></div><svg class="a" style="left:1157px;top:111px" width="15" height="15" viewBox="0 0 15 15"><circle cx="7.5" cy="7.5" r="7" fill="#6e6e6e"/><path d="M4.6,4.6 L10.4,10.4 M10.4,4.6 L4.6,10.4" stroke="#fff" stroke-width="1.9"/></svg><svg class="a" style="left:1175px;top:111px" width="15" height="15" viewBox="0 0 15 15"><circle cx="7.5" cy="7.5" r="7" fill="#6e6e6e"/><rect x="6.2" y="3.8" width="5.2" height="4.3" fill="none" stroke="#fff" stroke-width="1.1"/><rect x="3.6" y="6.4" width="5.2" height="4.3" fill="#6e6e6e" stroke="#fff" stroke-width="1.1"/></svg><div class="a" style="left:1280px;top:110px;font-size:12px;line-height:18px;color:#222">Elenco dei livelli</div><div class="a" style="left:1156px;top:130px;width:298px;height:27px;background:#e0e0e0"></div><div class="a" style="left:1156px;top:131px;width:60px;height:25px;border:1px solid #b2b2b2;background:linear-gradient(#f2f2f2,#e6e6e6 40%,#f4f4f4)"></div><div class="a" style="left:1216px;top:131px;width:60px;height:25px;border:1px solid #b2b2b2;background:linear-gradient(#f2f2f2,#e6e6e6 40%,#f4f4f4)"></div><div class="a" style="left:1276px;top:131px;width:60px;height:25px;border:1px solid #b2b2b2;background:linear-gradient(#f2f2f2,#e6e6e6 40%,#f4f4f4)"></div><div class="a" style="left:1336px;top:131px;width:60px;height:25px;border:1px solid #b2b2b2;background:linear-gradient(#f2f2f2,#e6e6e6 40%,#f4f4f4)"></div><div class="a" style="left:1395px;top:131px;width:60px;height:25px;border:1px solid #b2b2b2;background:linear-gradient(#f2f2f2,#e6e6e6 40%,#f4f4f4)"></div><svg class="a" style="left:1176.5px;top:136.8px" width="16.0" height="12.0" viewBox="0 0 16.0 12.0"><g transform="scale(1.0)"><path d="M0.8,6.2 C3,2 6,0.8 8,0.8 C10,0.8 13,2 15.2,6.2 C13,10 10,11.2 8,11.2 C6,11.2 3,10 0.8,6.2 Z" fill="#000"/><path d="M3,6.2 C4.5,4.3 6,3.6 8,3.6 C10,3.6 11.5,4.3 13,6.2 C11.5,8.3 10,9 8,9 C6,9 4.5,8.3 3,6.2 Z" fill="#fff"/><circle cx="8" cy="6.2" r="2.9" fill="#000"/><circle cx="7.2" cy="5.2" r="0.8" fill="#fff"/></g></svg><svg class="a" style="left:1236.5px;top:136.8px" width="16.0" height="12.0" viewBox="0 0 16.0 12.0"><g transform="scale(1.0)"><path d="M0.8,6.2 C3,2 6,0.8 8,0.8 C10,0.8 13,2 15.2,6.2 C13,10 10,11.2 8,11.2 C6,11.2 3,10 0.8,6.2 Z" fill="#a8a8a8"/><path d="M3,6.2 C4.5,4.3 6,3.6 8,3.6 C10,3.6 11.5,4.3 13,6.2 C11.5,8.3 10,9 8,9 C6,9 4.5,8.3 3,6.2 Z" fill="#fff"/><circle cx="8" cy="6.2" r="2.9" fill="#a8a8a8"/><circle cx="7.2" cy="5.2" r="0.8" fill="#fff"/></g></svg><svg class="a" style="left:1297px;top:136px" width="15" height="14" viewBox="0 0 15 14"><path d="M7.5,1 V13 M1.5,7 H13.5" stroke="#e00000" stroke-width="3"/></svg><svg class="a" style="left:1357px;top:136px" width="15" height="14" viewBox="0 0 15 14"><path d="M1.5,7 H13.5" stroke="#e00000" stroke-width="3"/></svg><svg class="a" style="left:1417px;top:135px" width="15" height="14" viewBox="0 0 15 14"><path d="M1.5,12.8 L3,9 L11.5,1.2 L13.8,3.4 L5.2,11.2 Z" fill="#f0b040" stroke="#8a5a10" stroke-width="0.8"/><path d="M11.5,1.2 L12.6,0.3 L14.8,2.4 L13.8,3.4 Z" fill="#e04040"/><path d="M1.5,12.8 L3,9 L5.2,11.2 Z" fill="#e8c8a0"/></svg><div class="a" style="left:1161px;top:163px;width:16px;height:9px;background:#fff;border:1px solid #000"></div><div class="a" style="left:1183px;top:159px;font-size:13px;line-height:16px;color:#111;letter-spacing:0.22px">0</div><svg class="a" style="left:1415.0px;top:161.0px" width="16.0" height="12.0" viewBox="0 0 16.0 12.0"><g transform="scale(1.0)"><path d="M0.8,6.2 C3,2 6,0.8 8,0.8 C10,0.8 13,2 15.2,6.2 C13,10 10,11.2 8,11.2 C6,11.2 3,10 0.8,6.2 Z" fill="#000"/><path d="M3,6.2 C4.5,4.3 6,3.6 8,3.6 C10,3.6 11.5,4.3 13,6.2 C11.5,8.3 10,9 8,9 C6,9 4.5,8.3 3,6.2 Z" fill="#fff"/><circle cx="8" cy="6.2" r="2.9" fill="#000"/><circle cx="7.2" cy="5.2" r="0.8" fill="#fff"/></g></svg><svg class="a" style="left:1439px;top:160px" width="12" height="14" viewBox="0 0 12 14"><path d="M3,6.5 V4.5 A3,3 0 0 1 9,4.5 V6.5" fill="none" stroke="#b8b8b8" stroke-width="1.6"/><rect x="1.5" y="6.5" width="9" height="7" rx="0.8" fill="#b8b8b8"/></svg><div class="a" style="left:1161px;top:183px;width:16px;height:9px;background:#ff0000;border:1px solid #000"></div><div class="a" style="left:1183px;top:179px;font-size:13px;line-height:16px;color:#111;letter-spacing:0.22px">Centro</div><svg class="a" style="left:1415.0px;top:181.0px" width="16.0" height="12.0" viewBox="0 0 16.0 12.0"><g transform="scale(1.0)"><path d="M0.8,6.2 C3,2 6,0.8 8,0.8 C10,0.8 13,2 15.2,6.2 C13,10 10,11.2 8,11.2 C6,11.2 3,10 0.8,6.2 Z" fill="#000"/><path d="M3,6.2 C4.5,4.3 6,3.6 8,3.6 C10,3.6 11.5,4.3 13,6.2 C11.5,8.3 10,9 8,9 C6,9 4.5,8.3 3,6.2 Z" fill="#fff"/><circle cx="8" cy="6.2" r="2.9" fill="#000"/><circle cx="7.2" cy="5.2" r="0.8" fill="#fff"/></g></svg><svg class="a" style="left:1439px;top:180px" width="12" height="14" viewBox="0 0 12 14"><path d="M3,6.5 V4.5 A3,3 0 0 1 9,4.5 V6.5" fill="none" stroke="#b8b8b8" stroke-width="1.6"/><rect x="1.5" y="6.5" width="9" height="7" rx="0.8" fill="#b8b8b8"/></svg><div class="a" style="left:1161px;top:203px;width:16px;height:9px;background:#000;border:1px solid #000"></div><div class="a" style="left:1183px;top:199px;font-size:13px;line-height:16px;color:#111;letter-spacing:0.22px">Sottile</div><svg class="a" style="left:1415.0px;top:201.0px" width="16.0" height="12.0" viewBox="0 0 16.0 12.0"><g transform="scale(1.0)"><path d="M0.8,6.2 C3,2 6,0.8 8,0.8 C10,0.8 13,2 15.2,6.2 C13,10 10,11.2 8,11.2 C6,11.2 3,10 0.8,6.2 Z" fill="#000"/><path d="M3,6.2 C4.5,4.3 6,3.6 8,3.6 C10,3.6 11.5,4.3 13,6.2 C11.5,8.3 10,9 8,9 C6,9 4.5,8.3 3,6.2 Z" fill="#fff"/><circle cx="8" cy="6.2" r="2.9" fill="#000"/><circle cx="7.2" cy="5.2" r="0.8" fill="#fff"/></g></svg><svg class="a" style="left:1439px;top:200px" width="12" height="14" viewBox="0 0 12 14"><path d="M3,6.5 V4.5 A3,3 0 0 1 9,4.5 V6.5" fill="none" stroke="#b8b8b8" stroke-width="1.6"/><rect x="1.5" y="6.5" width="9" height="7" rx="0.8" fill="#b8b8b8"/></svg><div class="a" style="left:1161px;top:223px;width:16px;height:9px;background:#000;border:1px solid #000"></div><div class="a" style="left:1183px;top:219px;font-size:13px;line-height:16px;color:#111;letter-spacing:0.22px">Visibile</div><svg class="a" style="left:1415.0px;top:221.0px" width="16.0" height="12.0" viewBox="0 0 16.0 12.0"><g transform="scale(1.0)"><path d="M0.8,6.2 C3,2 6,0.8 8,0.8 C10,0.8 13,2 15.2,6.2 C13,10 10,11.2 8,11.2 C6,11.2 3,10 0.8,6.2 Z" fill="#000"/><path d="M3,6.2 C4.5,4.3 6,3.6 8,3.6 C10,3.6 11.5,4.3 13,6.2 C11.5,8.3 10,9 8,9 C6,9 4.5,8.3 3,6.2 Z" fill="#fff"/><circle cx="8" cy="6.2" r="2.9" fill="#000"/><circle cx="7.2" cy="5.2" r="0.8" fill="#fff"/></g></svg><svg class="a" style="left:1439px;top:220px" width="12" height="14" viewBox="0 0 12 14"><path d="M3,6.5 V4.5 A3,3 0 0 1 9,4.5 V6.5" fill="none" stroke="#b8b8b8" stroke-width="1.6"/><rect x="1.5" y="6.5" width="9" height="7" rx="0.8" fill="#b8b8b8"/></svg><svg class="a" style="left:1393px;top:220px" width="15" height="14" viewBox="0 0 15 14"><path d="M1.5,12.8 L3,9 L11.5,1.2 L13.8,3.4 L5.2,11.2 Z" fill="#f0b040" stroke="#8a5a10" stroke-width="0.8"/><path d="M11.5,1.2 L12.6,0.3 L14.8,2.4 L13.8,3.4 Z" fill="#e04040"/><path d="M1.5,12.8 L3,9 L5.2,11.2 Z" fill="#e8c8a0"/></svg>
<div class="a" style="left:1454px;top:108px;width:46px;height:690px;background:linear-gradient(90deg,#eeeeee,#e2e2e2 40%,#cccccc 93%,#b9b9b9);border-left:1px solid #c8c8c8"></div><div class="a" style="left:1463.0px;top:116.0px;width:2px;height:2px;background:#9a9a9a"></div><div class="a" style="left:1469.0px;top:116.0px;width:2px;height:2px;background:#9a9a9a"></div><div class="a" style="left:1475.0px;top:116.0px;width:2px;height:2px;background:#9a9a9a"></div><div class="a" style="left:1481.0px;top:116.0px;width:2px;height:2px;background:#9a9a9a"></div><div class="a" style="left:1487.0px;top:116.0px;width:2px;height:2px;background:#9a9a9a"></div><div class="a" style="left:1457px;top:120px;width:42px;height:43px;background:#b9b9b9;border-radius:5px"></div><div class="a" style="left:1457px;top:416px;width:42px;height:44px;background:#b9b9b9;border-radius:5px"></div><div class="a" style="left:1458px;top:261px;width:41px;height:1px;background:repeating-linear-gradient(90deg,#666 0 1px,transparent 1px 4px)"></div><div class="a" style="left:1458px;top:408px;width:41px;height:1px;background:repeating-linear-gradient(90deg,#666 0 1px,transparent 1px 4px)"></div><svg class="a" style="left:1463px;top:127px" width="28" height="28" viewBox="0 0 28 28"><rect x="0.5" y="0.5" width="27" height="27" fill="#fff" stroke="#222"/><rect x="0.5" y="0.5" width="27" height="5" fill="#000"/><rect x="1.5" y="1.2" width="3.5" height="3.5" fill="#fff"/><path d="M8,12 L12,9.5 V21 L8,23.5 Z" fill="#999" stroke="#444" stroke-width="0.7"/><path d="M11,11 L19,8 V20 L11,23 Z" fill="#ddd" stroke="#555" stroke-width="0.7"/><path d="M13,12 L21,9 V21 L13,24 Z" fill="#fff" stroke="#555" stroke-width="0.7"/><path d="M15,20 L18.5,12 L19,19 Z" fill="none" stroke="#e03030" stroke-width="0.9"/></svg><svg class="a" style="left:1463px;top:174px" width="28" height="28" viewBox="0 0 28 28"><rect x="0.5" y="0.5" width="27" height="27" fill="#fff" stroke="#222"/><rect x="0.5" y="0.5" width="27" height="5" fill="#000"/><rect x="1.5" y="1.2" width="3.5" height="3.5" fill="#fff"/><rect x="6" y="9" width="11" height="9" fill="#f6e8b0" stroke="#555" stroke-width="0.8"/><circle cx="16.5" cy="18" r="5" fill="#f6e8b0" fill-opacity="0.8" stroke="#555" stroke-width="0.8"/></svg><svg class="a" style="left:1463px;top:220px" width="28" height="28" viewBox="0 0 28 28"><rect x="0.5" y="0.5" width="27" height="27" fill="#fff" stroke="#222"/><rect x="0.5" y="0.5" width="27" height="5" fill="#000"/><rect x="1.5" y="1.2" width="3.5" height="3.5" fill="#fff"/><rect x="5" y="10" width="18" height="11" rx="2" fill="#f0f2f6" stroke="#a8bede" stroke-width="0.9"/></svg><svg class="a" style="left:1463px;top:276px" width="28" height="28" viewBox="0 0 28 28"><rect x="0.5" y="0.5" width="27" height="27" fill="#fff" stroke="#222"/><rect x="0.5" y="0.5" width="27" height="5" fill="#000"/><rect x="1.5" y="1.2" width="3.5" height="3.5" fill="#fff"/><rect x="4" y="9" width="3.5" height="3" fill="#111"/><rect x="4" y="14" width="3.5" height="3" fill="#111"/><rect x="4" y="19" width="3.5" height="3" fill="#111"/><rect x="10" y="9" width="13" height="3" fill="none" stroke="#333" stroke-width="0.8"/><rect x="10" y="14" width="13" height="3" fill="none" stroke="#333" stroke-width="0.8"/><rect x="10" y="19" width="13" height="3" fill="none" stroke="#333" stroke-width="0.8"/></svg><svg class="a" style="left:1463px;top:322px" width="28" height="28" viewBox="0 0 28 28"><rect x="0.5" y="0.5" width="27" height="27" fill="#fff" stroke="#222"/><rect x="0.5" y="0.5" width="27" height="5" fill="#000"/><rect x="1.5" y="1.2" width="3.5" height="3.5" fill="#fff"/><path d="M6,10 H22 L15.5,17 V24 L12.5,22.5 V17 Z" fill="#bbb" stroke="#555" stroke-width="0.8"/></svg><svg class="a" style="left:1463px;top:368px" width="28" height="28" viewBox="0 0 28 28"><rect x="0.5" y="0.5" width="27" height="27" fill="#fff" stroke="#222"/><rect x="0.5" y="0.5" width="27" height="5" fill="#000"/><rect x="1.5" y="1.2" width="3.5" height="3.5" fill="#fff"/><path d="M6,9 L12,14 V19 L6,24 Z" fill="none" stroke="#555" stroke-width="0.8"/><rect x="12" y="12" width="9" height="9" fill="#888" stroke="#444" stroke-width="0.7"/><path d="M4,16.5 H25" stroke="#f08080" stroke-width="0.8" stroke-dasharray="1.5,1"/></svg><svg class="a" style="left:1463px;top:424px" width="28" height="28" viewBox="0 0 28 28"><rect x="0.5" y="0.5" width="27" height="27" fill="#fff" stroke="#222"/><rect x="0.5" y="0.5" width="27" height="5" fill="#000"/><rect x="1.5" y="1.2" width="3.5" height="3.5" fill="#fff"/><path d="M3,9h12M3,12h10M3,15h12M3,18h11" stroke="#777" stroke-width="0.7"/><rect x="0.5" y="22" width="27" height="5.5" fill="#fff" stroke="#222" stroke-width="0.8"/><path d="M9,24.7h15" stroke="#888" stroke-width="0.8"/></svg><svg class="a" style="left:1463px;top:471px" width="28" height="28" viewBox="0 0 28 28"><rect x="0.5" y="0.5" width="27" height="27" fill="#fff" stroke="#222"/><rect x="0.5" y="0.5" width="27" height="5" fill="#000"/><rect x="1.5" y="1.2" width="3.5" height="3.5" fill="#fff"/><rect x="8" y="9" width="12" height="15" fill="#c89040" stroke="#8a5a14" stroke-width="0.8"/><rect x="9.5" y="11" width="9" height="11.5" fill="#f8f8f8"/><rect x="11" y="8" width="6" height="2.5" fill="#888"/></svg>
<div class="a" style="left:0;top:798px;width:1500px;height:46px;background:#dcdcdc"></div><div class="a" style="left:2px;top:806px;font-size:9.4px;line-height:12px;color:#1a1a1a;white-space:nowrap">70,10</div><div class="a" style="left:2px;top:826px;font-size:9.4px;line-height:12px;color:#1a1a1a;white-space:nowrap">@50,0</div><div class="a" style="left:253px;top:802px;width:1px;height:42px;background:#8a8a8a"></div><div class="a" style="left:256px;top:806px;font-size:10px;line-height:12px;color:#1a1a1a;white-space:nowrap">70.7107&lt;8°</div><div class="a" style="left:256px;top:826px;font-size:10px;line-height:12px;color:#1a1a1a;white-space:nowrap">@50&lt;0°</div><div class="a" style="left:506.5px;top:819px;width:6px;height:6px;border-radius:3px;background:#c2c2c2"></div><div class="a" style="left:940.5px;top:819px;width:6px;height:6px;border-radius:3px;background:#c2c2c2"></div><div class="a" style="left:1269px;top:819px;width:6px;height:6px;border-radius:3px;background:#c2c2c2"></div><div class="a" style="left:630px;top:816px;font-size:10.3px;line-height:12px;color:#1a1a1a;white-space:nowrap">Punto obiettivo</div><svg class="a" style="left:715px;top:805px" width="22" height="32" viewBox="0 0 22 32"><rect x="1.5" y="1" width="18" height="30" rx="9" fill="#fff" stroke="#222" stroke-width="1"/><path d="M1.5,12 H19.5 M10.5,1 V12" stroke="#222" stroke-width="0.9"/><rect x="8.7" y="3.5" width="3.6" height="6" rx="1.8" fill="#fff" stroke="#222" stroke-width="0.9"/></svg><div class="a" style="left:754px;top:816px;font-size:10.3px;line-height:12px;color:#1a1a1a;white-space:nowrap">Indietro</div><div class="a" style="left:949px;top:811px;font-size:10.3px;line-height:12px;color:#1a1a1a;white-space:nowrap">Entità selezionate:</div><div class="a" style="left:949px;top:822px;font-size:10.3px;line-height:12px;color:#1a1a1a;white-space:nowrap">26 entità su 3 livelli</div>
</div></body></html>
